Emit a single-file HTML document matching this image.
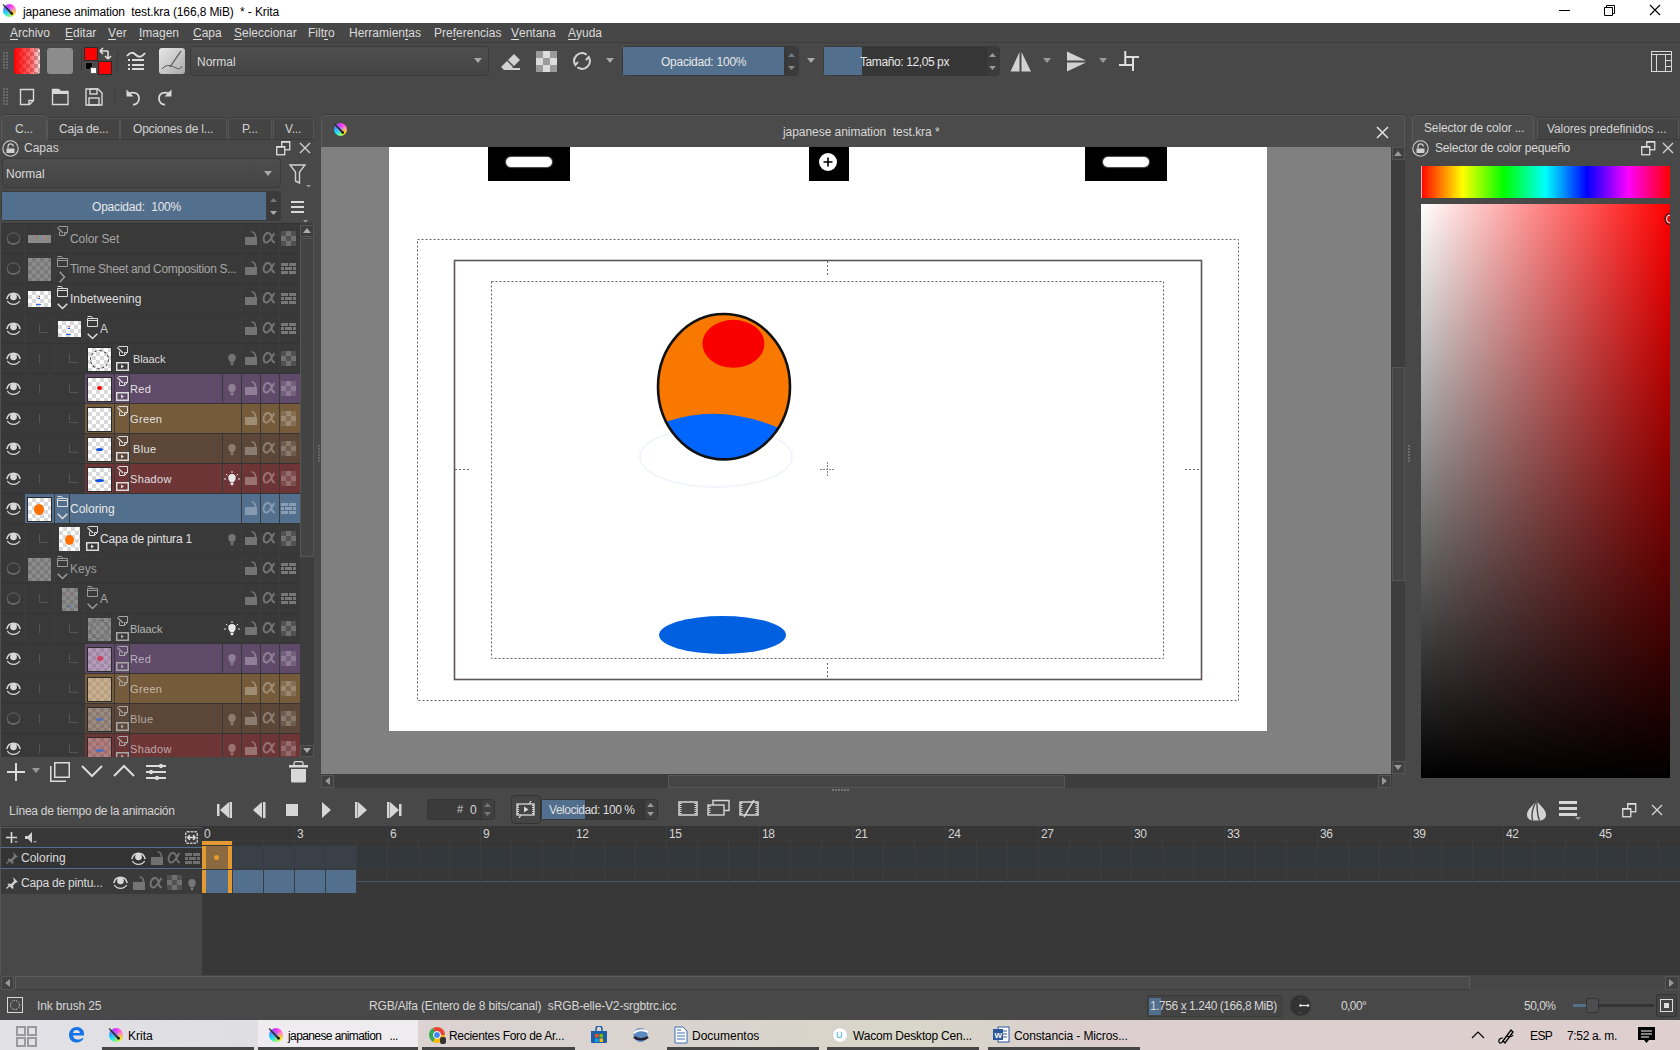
<!DOCTYPE html>
<html><head><meta charset="utf-8">
<style>
*{margin:0;padding:0;box-sizing:border-box}
html,body{width:1680px;height:1050px;overflow:hidden;background:#484848}
body{position:relative;font-family:"Liberation Sans",sans-serif;font-size:12px;color:#d8d8d8}
.a{position:absolute;display:block}
.t{position:absolute;white-space:nowrap}
u{text-decoration:none;border-bottom:1px solid currentColor;display:inline-block;line-height:12px;padding-bottom:0}
</style></head><body>
<div class="a" style="left:0px;top:0px;width:1680px;height:23px;background:#fff;"></div>
<div class="a" style="left:3px;top:4px;width:13px;height:13px;border-radius:50%;background:radial-gradient(circle at 45% 55%,rgba(120,160,255,.9) 0,rgba(120,160,255,0) 45%),conic-gradient(from 20deg,#ff3cf0,#ff8ac0 50deg,#ffe000 110deg,#9cff60 150deg,#00e8ff 220deg,#4a8cff 270deg,#c040ff 320deg,#ff3cf0)"></div>
<svg class="a" style="left:2px;top:4px;" width="14" height="14" viewBox="0 0 14 14"><path d="M0.50 0.80L1.60 0.20L10.50 8.80L9.20 10.50z" fill="#2a2a2a"/><circle cx="9.80" cy="9.60" r="1.30" fill="#1a1a1a"/></svg>
<div class="t" style="left:23px;top:6px;font-size:12px;line-height:12px;color:#000;letter-spacing:-0.12px">japanese animation&nbsp; test.kra (166,8 MiB)&nbsp; * - Krita</div>
<div class="a" style="left:1559px;top:10px;width:11px;height:1px;background:#000;"></div>
<svg class="a" style="left:1603px;top:4px;" width="13" height="13" viewBox="0 0 13 13"><path d="M1.5 3.5h8v8h-8z" fill="none" stroke="#000"/><path d="M3.5 3.5V1.5h8v8H9.5" fill="none" stroke="#000"/></svg>
<svg class="a" style="left:1649px;top:4px;" width="13" height="13" viewBox="0 0 13 13"><path d="M1 1L11 11M11 1L1 11" stroke="#000" stroke-width="1.1"/></svg>
<div class="a" style="left:0px;top:23px;width:1680px;height:19px;background:#474747;"></div>
<div class="a" style="left:0px;top:42px;width:1680px;height:1px;background:#3d3d3d;"></div>
<div class="t" style="left:10px;top:27px;font-size:12px;line-height:12px;color:#dadada;"><u>A</u>rchivo</div>
<div class="t" style="left:65px;top:27px;font-size:12px;line-height:12px;color:#dadada;"><u>E</u>ditar</div>
<div class="t" style="left:108px;top:27px;font-size:12px;line-height:12px;color:#dadada;"><u>V</u>er</div>
<div class="t" style="left:139px;top:27px;font-size:12px;line-height:12px;color:#dadada;"><u>I</u>magen</div>
<div class="t" style="left:193px;top:27px;font-size:12px;line-height:12px;color:#dadada;"><u>C</u>apa</div>
<div class="t" style="left:234px;top:27px;font-size:12px;line-height:12px;color:#dadada;"><u>S</u>eleccionar</div>
<div class="t" style="left:308px;top:27px;font-size:12px;line-height:12px;color:#dadada;">Filt<u>r</u>o</div>
<div class="t" style="left:349px;top:27px;font-size:12px;line-height:12px;color:#dadada;">Herramien<u>t</u>as</div>
<div class="t" style="left:434px;top:27px;font-size:12px;line-height:12px;color:#dadada;">Pre<u>f</u>erencias</div>
<div class="t" style="left:511px;top:27px;font-size:12px;line-height:12px;color:#dadada;"><u>V</u>entana</div>
<div class="t" style="left:568px;top:27px;font-size:12px;line-height:12px;color:#dadada;"><u>A</u>yuda</div>
<svg class="a" style="left:3px;top:52px;" width="6" height="18" viewBox="0 0 6 18"><rect x="0" y="0" width="2" height="2" fill="#6a6a6a"/><rect x="3" y="0" width="2" height="2" fill="#6a6a6a"/><rect x="0" y="3" width="2" height="2" fill="#6a6a6a"/><rect x="3" y="3" width="2" height="2" fill="#6a6a6a"/><rect x="0" y="6" width="2" height="2" fill="#6a6a6a"/><rect x="3" y="6" width="2" height="2" fill="#6a6a6a"/><rect x="0" y="9" width="2" height="2" fill="#6a6a6a"/><rect x="3" y="9" width="2" height="2" fill="#6a6a6a"/><rect x="0" y="12" width="2" height="2" fill="#6a6a6a"/><rect x="3" y="12" width="2" height="2" fill="#6a6a6a"/><rect x="0" y="15" width="2" height="2" fill="#6a6a6a"/><rect x="3" y="15" width="2" height="2" fill="#6a6a6a"/></svg>
<div class="a" style="left:14px;top:48px;width:26px;height:26px;border-radius:3px;background:linear-gradient(to right,rgba(255,0,0,1),rgba(255,0,0,.55) 70%,rgba(255,0,0,.1)),repeating-conic-gradient(#bbb 0 25%,#fff 0 50%) 0 0/8px 8px"></div>
<div class="a" style="left:47px;top:48px;width:26px;height:26px;border-radius:3px;background:#8c8c8c"></div>
<div class="a" style="left:81px;top:50px;width:1px;height:22px;background:#3e3e3e;"></div>
<div class="a" style="left:84px;top:47px;width:14px;height:14px;background:#2a2a2a;"></div>
<div class="a" style="left:85px;top:48px;width:12px;height:12px;background:#f00;"></div>
<svg class="a" style="left:98px;top:47px;" width="14" height="14" viewBox="0 0 14 14"><path d="M2 4h8M2 4l3-3M2 4l3 3M10 4v8M10 12l-3-3M10 12l3-3" stroke="#ddd" stroke-width="1.6" fill="none"/></svg>
<div class="a" style="left:85px;top:62px;width:8px;height:8px;background:#555;"></div>
<div class="a" style="left:86px;top:63px;width:6px;height:6px;background:#000;"></div>
<div class="a" style="left:90px;top:67px;width:7px;height:7px;background:#555;"></div>
<div class="a" style="left:91px;top:68px;width:5px;height:5px;background:#fff;"></div>
<div class="a" style="left:98px;top:61px;width:14px;height:14px;background:#2a2a2a;"></div>
<div class="a" style="left:99px;top:62px;width:12px;height:12px;background:#f00;"></div>
<div class="a" style="left:117px;top:50px;width:1px;height:22px;background:#3e3e3e;"></div>
<svg class="a" style="left:126px;top:50px;" width="22" height="22" viewBox="0 0 22 22"><path d="M1 6c3-4 6-4 9-1s6 2 9-2" stroke="#dcdcdc" stroke-width="2" fill="none"/><rect x="2" y="9" width="2" height="2" fill="#ddd"/><rect x="6" y="9" width="12" height="2" fill="#ddd"/><rect x="2" y="14" width="2" height="2" fill="#ddd"/><rect x="6" y="14" width="12" height="2" fill="#ddd"/><rect x="2" y="18" width="2" height="2" fill="#ddd"/><rect x="6" y="18" width="12" height="2" fill="#ddd"/></svg>
<div class="a" style="left:159px;top:48px;width:26px;height:26px;border-radius:3px;background:linear-gradient(135deg,#e8e8e8,#aaa)"></div>
<svg class="a" style="left:159px;top:48px;" width="26" height="26" viewBox="0 0 26 26"><path d="M3 21c5-6 10-3 14-1s5 0 6-2" stroke="#555" stroke-width="1" fill="none"/><path d="M11 19L22 3" stroke="#555" stroke-width="1.3"/></svg>
<div class="a" style="left:190px;top:46px;width:299px;height:30px;border-radius:4px;border:1px solid #3a3a3a;background:linear-gradient(#4f4f4f,#444)"></div>
<div class="t" style="left:197px;top:56px;font-size:12px;line-height:12px;color:#dadada;">Normal</div>
<svg class="a" style="left:474px;top:58px;" width="9" height="6" viewBox="0 0 9 6"><path d="M0 0h8L4 5z" fill="#a8a8a8"/></svg>
<svg class="a" style="left:500px;top:51px;" width="21" height="20" viewBox="0 0 21 20"><path d="M8 9L14 3l6 6-6 6z" fill="#d2d2d2"/><path d="M7 10l6 6-3 3H4L1 16z" fill="#d2d2d2"/><rect x="6" y="17" width="14" height="2" fill="#d2d2d2"/></svg>
<svg class="a" style="left:536px;top:51px;" width="21" height="21" viewBox="0 0 21 21"><rect x="0" y="0" width="7" height="7" fill="#9a9a9a"/><rect x="7" y="0" width="7" height="7" fill="#dcdcdc"/><rect x="14" y="0" width="7" height="7" fill="#9a9a9a"/><rect x="0" y="7" width="7" height="7" fill="#dcdcdc"/><rect x="7" y="7" width="7" height="7" fill="#9a9a9a"/><rect x="14" y="7" width="7" height="7" fill="#dcdcdc"/><rect x="0" y="14" width="7" height="7" fill="#9a9a9a"/><rect x="7" y="14" width="7" height="7" fill="#dcdcdc"/><rect x="14" y="14" width="7" height="7" fill="#9a9a9a"/></svg>
<svg class="a" style="left:572px;top:51px;" width="20" height="20" viewBox="0 0 20 20"><g stroke="#d2d2d2" stroke-width="2" fill="none" stroke-linecap="round"><path d="M14 3.3A7.8 7.8 0 0 0 3.3 14L5.4 11.6"/><path d="M6 16.7A7.8 7.8 0 0 0 16.7 6L14.4 8.6"/></g></svg>
<svg class="a" style="left:606px;top:58px;" width="9" height="6" viewBox="0 0 9 6"><path d="M0 0h8L4 5z" fill="#a8a8a8"/></svg>
<div class="a" style="left:622px;top:46px;width:177px;height:30px;border-radius:4px;border:1px solid #3a3a3a;background:#3a3a3a"></div>
<div class="a" style="left:623px;top:47px;width:161px;height:28px;background:#52708e;"></div>
<div class="a" style="left:785px;top:47px;width:13px;height:28px;background:#3b3b3b;border-left:1px solid #333"></div>
<svg class="a" style="left:786px;top:52px;" width="11" height="20" viewBox="0 0 11 20"><path d="M2 5h7L5.5 1z" fill="#6a7a8a"/><path d="M2 14h7L5.5 18z" fill="#888"/></svg>
<div class="t" style="left:661px;top:56px;font-size:12px;line-height:12px;color:#e6e6e6;letter-spacing:-0.25px">Opacidad: 100%</div>
<svg class="a" style="left:807px;top:58px;" width="9" height="6" viewBox="0 0 9 6"><path d="M0 0h8L4 5z" fill="#a8a8a8"/></svg>
<div class="a" style="left:823px;top:46px;width:177px;height:30px;border-radius:4px;border:1px solid #3a3a3a;background:#363636"></div>
<div class="a" style="left:824px;top:47px;width:38px;height:28px;background:#52708e;"></div>
<div class="a" style="left:986px;top:47px;width:13px;height:28px;background:#3b3b3b;border-left:1px solid #333"></div>
<svg class="a" style="left:987px;top:52px;" width="11" height="20" viewBox="0 0 11 20"><path d="M2 5h7L5.5 1z" fill="#999"/><path d="M2 14h7L5.5 18z" fill="#999"/></svg>
<div class="t" style="left:860px;top:56px;font-size:12px;line-height:12px;color:#e6e6e6;letter-spacing:-0.4px">Tamaño: 12,05 px</div>
<svg class="a" style="left:1010px;top:51px;" width="22" height="21" viewBox="0 0 22 21"><path d="M0.5 20.5L9.5 1v19.5z" fill="#d2d2d2"/><path d="M11.5 1l9.5 19.5h-9.5z" fill="#d2d2d2"/></svg>
<svg class="a" style="left:1043px;top:58px;" width="9" height="6" viewBox="0 0 9 6"><path d="M0 0h8L4 5z" fill="#999"/></svg>
<svg class="a" style="left:1066px;top:51px;" width="22" height="21" viewBox="0 0 22 21"><path d="M1 0.5L20 9.5H1z" fill="#d2d2d2"/><path d="M1 11.5h19L1 20.5z" fill="#d2d2d2"/></svg>
<svg class="a" style="left:1099px;top:58px;" width="9" height="6" viewBox="0 0 9 6"><path d="M0 0h8L4 5z" fill="#999"/></svg>
<svg class="a" style="left:1118px;top:50px;" width="22" height="22" viewBox="0 0 22 22"><path d="M7.25 1v15M1 15h15M15 7v14M7 7h14" stroke="#e0e0e0" stroke-width="2" fill="none"/></svg>
<svg class="a" style="left:1651px;top:51px;" width="22" height="22" viewBox="0 0 22 22"><rect x="0.5" y="0.5" width="20" height="20" fill="none" stroke="#d8d8d8"/><path d="M0.5 3.5h20M5.5 3.5v17M14.5 3.5v17M14.5 9.5h6M14.5 15.5h6" stroke="#d8d8d8" fill="none"/></svg>
<svg class="a" style="left:3px;top:88px;" width="6" height="18" viewBox="0 0 6 18"><rect x="0" y="0" width="2" height="2" fill="#6a6a6a"/><rect x="3" y="0" width="2" height="2" fill="#6a6a6a"/><rect x="0" y="3" width="2" height="2" fill="#6a6a6a"/><rect x="3" y="3" width="2" height="2" fill="#6a6a6a"/><rect x="0" y="6" width="2" height="2" fill="#6a6a6a"/><rect x="3" y="6" width="2" height="2" fill="#6a6a6a"/><rect x="0" y="9" width="2" height="2" fill="#6a6a6a"/><rect x="3" y="9" width="2" height="2" fill="#6a6a6a"/><rect x="0" y="12" width="2" height="2" fill="#6a6a6a"/><rect x="3" y="12" width="2" height="2" fill="#6a6a6a"/><rect x="0" y="15" width="2" height="2" fill="#6a6a6a"/><rect x="3" y="15" width="2" height="2" fill="#6a6a6a"/></svg>
<svg class="a" style="left:19px;top:88px;" width="16" height="18" viewBox="0 0 16 18"><path d="M1.5 1.5h13v11l-4 4h-9z" fill="none" stroke="#d8d8d8" stroke-width="1.4"/><path d="M10 16v-3.5h4" fill="none" stroke="#d8d8d8" stroke-width="1.4"/></svg>
<svg class="a" style="left:51px;top:88px;" width="18" height="18" viewBox="0 0 18 18"><path d="M1.5 16.5V1.5h6l2 2h7.5v13z" fill="none" stroke="#d8d8d8" stroke-width="1.4"/><path d="M1 1h6.5l2 2.5H17V6H1z" fill="#d8d8d8"/></svg>
<svg class="a" style="left:85px;top:88px;" width="18" height="18" viewBox="0 0 18 18"><path d="M1 1h12l4 4v12H1z" fill="none" stroke="#d8d8d8" stroke-width="1.4"/><rect x="5" y="1" width="7" height="5" fill="none" stroke="#d8d8d8" stroke-width="1.4"/><rect x="4" y="10" width="10" height="7" fill="none" stroke="#d8d8d8" stroke-width="1.4"/></svg>
<div class="a" style="left:114px;top:89px;width:1px;height:18px;background:#3e3e3e;"></div>
<svg class="a" style="left:125px;top:88px;" width="17" height="18" viewBox="0 0 17 18"><path d="M3 6.5C6 3.5 14 4 14 10.5 14 14.5 11 17 8 16.5" stroke="#d8d8d8" stroke-width="1.8" fill="none"/><path d="M1.5 1.5v7h7z" fill="#d8d8d8"/></svg>
<svg class="a" style="left:156px;top:88px;" width="17" height="18" viewBox="0 0 17 18"><path d="M14 6.5C11 3.5 3 4 3 10.5 3 14.5 6 17 9 16.5" stroke="#d8d8d8" stroke-width="1.8" fill="none"/><path d="M15.5 1.5v7h-7z" fill="#d8d8d8"/></svg>
<div class="a" style="left:46px;top:139px;width:268px;height:1px;background:#3a3a3a;"></div>
<div class="a" style="left:47px;top:118px;width:73px;height:21px;background:#444;border:1px solid #555;border-bottom:none;border-radius:4px 4px 0 0;box-shadow:0 -1px 0 #3a3a3a"></div>
<div class="t" style="left:59px;top:123px;font-size:12px;line-height:12px;color:#d2d2d2;letter-spacing:-0.2px">Caja de...</div>
<div class="a" style="left:120px;top:118px;width:107px;height:21px;background:#444;border:1px solid #555;border-bottom:none;border-radius:4px 4px 0 0;box-shadow:0 -1px 0 #3a3a3a"></div>
<div class="t" style="left:133px;top:123px;font-size:12px;line-height:12px;color:#d2d2d2;letter-spacing:-0.2px">Opciones de l...</div>
<div class="a" style="left:228px;top:118px;width:44px;height:21px;background:#444;border:1px solid #555;border-bottom:none;border-radius:4px 4px 0 0;box-shadow:0 -1px 0 #3a3a3a"></div>
<div class="t" style="left:242px;top:123px;font-size:12px;line-height:12px;color:#d2d2d2;letter-spacing:-0.2px">P...</div>
<div class="a" style="left:273px;top:118px;width:41px;height:21px;background:#444;border:1px solid #555;border-bottom:none;border-radius:4px 4px 0 0;box-shadow:0 -1px 0 #3a3a3a"></div>
<div class="t" style="left:285px;top:123px;font-size:12px;line-height:12px;color:#d2d2d2;letter-spacing:-0.2px">V...</div>
<div class="a" style="left:1px;top:115px;width:46px;height:26px;background:#4b4b4b;border:1px solid #5a5a5a;border-bottom:none;border-radius:4px 4px 0 0;box-shadow:0 -1px 0 #3a3a3a"></div>
<div class="t" style="left:15px;top:123px;font-size:12px;line-height:12px;color:#d2d2d2;letter-spacing:-0.2px">C...</div>
<svg class="a" style="left:2px;top:140px;" width="17" height="17" viewBox="0 0 17 17"><circle cx="8.5" cy="8.5" r="7.7" fill="none" stroke="#d0d0d0" stroke-width="1.1"/><rect x="4.5" y="8.5" width="8" height="4.5" fill="#d0d0d0"/><path d="M6 8.5V6.5a2.6 2.6 0 0 1 5.2 0" fill="none" stroke="#d0d0d0" stroke-width="1.2"/></svg>
<div class="t" style="left:24px;top:142px;font-size:12px;line-height:12px;color:#d2d2d2;">Capas</div>
<svg class="a" style="left:275px;top:140px;" width="16" height="16" viewBox="0 0 16 16"><rect x="6.75" y="1.75" width="8" height="8" fill="none" stroke="#dedede" stroke-width="1.3"/><rect x="6.5" y="1" width="8.5" height="1.6" fill="#dedede"/><rect x="1.75" y="6.75" width="8" height="8" fill="#484848" stroke="#dedede" stroke-width="1.3"/><rect x="1.5" y="6" width="8.5" height="1.6" fill="#dedede"/></svg>
<svg class="a" style="left:299px;top:142px;" width="12" height="12" viewBox="0 0 12 12"><path d="M1 1L11 11M11 1L1 11" stroke="#d0d0d0" stroke-width="1.4"/></svg>
<div class="a" style="left:2px;top:158px;width:279px;height:30px;border-radius:4px;border:1px solid #3a3a3a;background:linear-gradient(#4e4e4e,#444)"></div>
<div class="t" style="left:6px;top:168px;font-size:12px;line-height:12px;color:#dadada;">Normal</div>
<svg class="a" style="left:264px;top:171px;" width="9" height="6" viewBox="0 0 9 6"><path d="M0 0h8L4 5z" fill="#a8a8a8"/></svg>
<svg class="a" style="left:288px;top:163px;" width="24" height="26" viewBox="0 0 24 26"><path d="M2 2h15l-5.5 7v11l-4-2V9z" fill="none" stroke="#d0d0d0" stroke-width="1.4"/><path d="M18 22h5l-2.5 2.5z" fill="#999"/></svg>
<div class="a" style="left:1px;top:191px;width:280px;height:30px;border-radius:4px;border:1px solid #3a3a3a;background:#3b3b3b"></div>
<div class="a" style="left:2px;top:192px;width:264px;height:28px;background:#52708e;"></div>
<div class="a" style="left:267px;top:192px;width:13px;height:28px;background:#3b3b3b"></div>
<svg class="a" style="left:268px;top:197px;" width="11" height="20" viewBox="0 0 11 20"><path d="M2 5h7L5.5 1z" fill="#777"/><path d="M2 14h7L5.5 18z" fill="#aaa"/></svg>
<div class="t" style="left:92px;top:201px;font-size:12px;line-height:12px;color:#e6e6e6;letter-spacing:-0.2px">Opacidad:&nbsp; 100%</div>
<svg class="a" style="left:289px;top:198px;" width="20" height="26" viewBox="0 0 20 26"><rect x="2" y="3" width="13" height="2" fill="#d8d8d8"/><rect x="2" y="8" width="13" height="2" fill="#d8d8d8"/><rect x="2" y="13" width="13" height="2" fill="#d8d8d8"/><path d="M14 22h5l-2.5 2.5z" fill="#999"/></svg>
<div class="a" style="left:0px;top:223px;width:300px;height:534px;background:#393939;"></div>
<div class="a" style="left:0px;top:223px;width:1px;height:534px;background:#505050;"></div>
<div class="a" style="left:300px;top:223px;width:14px;height:534px;background:#3d3d3d;"></div>
<div class="a" style="left:300px;top:225px;width:14px;height:12px;border:1px solid #575757;background:#3d3d3d"></div>
<svg class="a" style="left:303px;top:228px;" width="9" height="6" viewBox="0 0 9 6"><path d="M0 5h8L4 0z" fill="#aaa"/></svg>
<div class="a" style="left:300px;top:238px;width:14px;height:319px;border:1px solid #575757;background:#434343"></div>
<div class="a" style="left:300px;top:745px;width:14px;height:12px;border:1px solid #575757;background:#3d3d3d"></div>
<svg class="a" style="left:303px;top:748px;" width="9" height="6" viewBox="0 0 9 6"><path d="M0 0h8L4 5z" fill="#aaa"/></svg>
<div class="a" style="left:1px;top:223px;width:299px;height:1px;background:#343434;"></div>
<svg class="a" style="left:6px;top:232px;" width="15" height="14" viewBox="0 0 15 14"><ellipse cx="7.5" cy="6.5" rx="6.3" ry="5.6" fill="none" stroke="#666" stroke-width="1"/><path d="M1.5 9C4 13 11 13 13.5 9" fill="none" stroke="#707070" stroke-width="1.3"/></svg>
<div class="a" style="left:24px;top:224px;width:1px;height:29px;background:#3d3d3d;"></div>
<div class="a" style="left:54px;top:224px;width:1px;height:29px;background:#3d3d3d;"></div>
<div class="a" style="left:69px;top:224px;width:1px;height:29px;background:#3d3d3d;"></div>
<div class="a" style="left:241px;top:224px;width:1px;height:29px;background:#3d3d3d;"></div>
<div class="a" style="left:260px;top:224px;width:1px;height:29px;background:#3d3d3d;"></div>
<div class="a" style="left:279px;top:224px;width:1px;height:29px;background:#3d3d3d;"></div>
<div class="a" style="left:28px;top:235px;width:23px;height:8px;background:#8a8a8a"></div>
<div class="a" style="left:37px;top:236px;width:1px;height:3px;background:#c06060;"></div>
<div class="a" style="left:39px;top:236px;width:1px;height:3px;background:#60b060;"></div>
<div class="a" style="left:41px;top:236px;width:1px;height:3px;background:#50a0d0;"></div>
<div class="a" style="left:43px;top:236px;width:1px;height:3px;background:#c070b0;"></div>
<div class="a" style="left:45px;top:236px;width:1px;height:3px;background:#d09030;"></div>
<svg class="a" style="left:57px;top:226px;" width="12" height="11" viewBox="0 0 12 11"><path d="M1.5 0.5H10.5V6.5L7.5 9.5H2.5V5.5" fill="none" stroke="#9a9a9a" stroke-width="1"/><path d="M7.5 9.5V6.5H10.5" fill="none" stroke="#9a9a9a"/><path d="M0.3 1.5L6 7" stroke="#9a9a9a" stroke-width="1.3"/></svg>
<div class="t" style="left:70px;top:233px;font-size:12px;line-height:12px;color:#a6a6a6;letter-spacing:-0.1px">Color Set</div>
<svg class="a" style="left:245px;top:231px;" width="13" height="15" viewBox="0 0 13 15"><rect x="0" y="6" width="12" height="8" fill="rgba(255,255,255,0.30)"/><path d="M6.5 0.8A4 5 0 0 1 10.5 6" fill="none" stroke="rgba(255,255,255,0.30)" stroke-width="1.6"/></svg>
<svg class="a" style="left:262px;top:232px" width="15" height="12" viewBox="0 0 15 13"><path d="M9.8 5.5C9 2.2 7.3 1 5.6 1 2.8 1 1.1 4.5 1.1 7.6 1.1 10.2 2.6 11.6 4.6 11.3 7.4 10.9 10 5.5 12.8 1.2M9.6 6.2C9.9 9 11 11.2 13.3 11.4" fill="none" stroke="rgba(255,255,255,0.30)" stroke-width="2.1"/></svg>
<svg class="a" style="left:281px;top:231px;" width="15" height="15" viewBox="0 0 15 15"><rect x="0" y="0" width="5" height="5" fill="rgba(255,255,255,0.12)"/><rect x="5" y="0" width="5" height="5" fill="rgba(255,255,255,0.28)"/><rect x="10" y="0" width="5" height="5" fill="rgba(255,255,255,0.12)"/><rect x="0" y="5" width="5" height="5" fill="rgba(255,255,255,0.28)"/><rect x="5" y="5" width="5" height="5" fill="rgba(255,255,255,0.12)"/><rect x="10" y="5" width="5" height="5" fill="rgba(255,255,255,0.28)"/><rect x="0" y="10" width="5" height="5" fill="rgba(255,255,255,0.12)"/><rect x="5" y="10" width="5" height="5" fill="rgba(255,255,255,0.28)"/><rect x="10" y="10" width="5" height="5" fill="rgba(255,255,255,0.12)"/></svg>
<div class="a" style="left:1px;top:253px;width:299px;height:1px;background:#343434;"></div>
<svg class="a" style="left:6px;top:262px;" width="15" height="14" viewBox="0 0 15 14"><ellipse cx="7.5" cy="6.5" rx="6.3" ry="5.6" fill="none" stroke="#666" stroke-width="1"/><path d="M1.5 9C4 13 11 13 13.5 9" fill="none" stroke="#707070" stroke-width="1.3"/></svg>
<div class="a" style="left:24px;top:254px;width:1px;height:29px;background:#3d3d3d;"></div>
<div class="a" style="left:54px;top:254px;width:1px;height:29px;background:#3d3d3d;"></div>
<div class="a" style="left:69px;top:254px;width:1px;height:29px;background:#3d3d3d;"></div>
<div class="a" style="left:241px;top:254px;width:1px;height:29px;background:#3d3d3d;"></div>
<div class="a" style="left:260px;top:254px;width:1px;height:29px;background:#3d3d3d;"></div>
<div class="a" style="left:279px;top:254px;width:1px;height:29px;background:#3d3d3d;"></div>
<div class="a" style="left:28px;top:258px;width:23px;height:23px;background:repeating-conic-gradient(#7a7a7a 0 25%,#8c8c8c 0 50%) 0 0/8px 8px"></div>
<svg class="a" style="left:57px;top:256px;" width="11" height="11" viewBox="0 0 11 11"><path d="M0.5 2.5h10v8h-10z" fill="none" stroke="#9a9a9a"/><path d="M0.5 0.5h4l1.5 2" fill="none" stroke="#9a9a9a"/><path d="M0.5 4.5h10" stroke="#9a9a9a"/></svg>
<svg class="a" style="left:59px;top:271px;" width="7" height="12" viewBox="0 0 7 12"><path d="M0.7 0.7L5.5 6 0.7 11.3" fill="none" stroke="#9a9a9a" stroke-width="1.5"/></svg>
<div class="t" style="left:70px;top:263px;font-size:12px;line-height:12px;color:#a6a6a6;letter-spacing:-0.3px">Time Sheet and Composition S...</div>
<svg class="a" style="left:245px;top:261px;" width="13" height="15" viewBox="0 0 13 15"><rect x="0" y="6" width="12" height="8" fill="rgba(255,255,255,0.30)"/><path d="M6.5 0.8A4 5 0 0 1 10.5 6" fill="none" stroke="rgba(255,255,255,0.30)" stroke-width="1.6"/></svg>
<svg class="a" style="left:262px;top:262px" width="15" height="12" viewBox="0 0 15 13"><path d="M9.8 5.5C9 2.2 7.3 1 5.6 1 2.8 1 1.1 4.5 1.1 7.6 1.1 10.2 2.6 11.6 4.6 11.3 7.4 10.9 10 5.5 12.8 1.2M9.6 6.2C9.9 9 11 11.2 13.3 11.4" fill="none" stroke="rgba(255,255,255,0.30)" stroke-width="2.1"/></svg>
<svg class="a" style="left:281px;top:263px;" width="15" height="12" viewBox="0 0 15 12"><g fill="rgba(255,255,255,0.32)"><rect x="0" y="0" width="7" height="3"/><rect x="8" y="0" width="7" height="3"/><rect x="0" y="4" width="3" height="3"/><rect x="4" y="4" width="7" height="3"/><rect x="12" y="4" width="3" height="3"/><rect x="0" y="8" width="7" height="3"/><rect x="8" y="8" width="7" height="3"/></g></svg>
<div class="a" style="left:1px;top:283px;width:299px;height:1px;background:#343434;"></div>
<svg class="a" style="left:6px;top:292px;" width="15" height="14" viewBox="0 0 15 14"><path d="M0.8 7.2C2.5 -0.6 12.5 -0.6 14.2 7.2" fill="none" stroke="#d8d8d8" stroke-width="1.5"/><circle cx="7.5" cy="4.8" r="3.4" fill="#d8d8d8"/><path d="M1.3 9C4 13.5 11 13.5 13.7 9" fill="none" stroke="#d8d8d8" stroke-width="1.3"/></svg>
<div class="a" style="left:24px;top:284px;width:1px;height:29px;background:#3d3d3d;"></div>
<div class="a" style="left:54px;top:284px;width:1px;height:29px;background:#3d3d3d;"></div>
<div class="a" style="left:69px;top:284px;width:1px;height:29px;background:#3d3d3d;"></div>
<div class="a" style="left:241px;top:284px;width:1px;height:29px;background:#3d3d3d;"></div>
<div class="a" style="left:260px;top:284px;width:1px;height:29px;background:#3d3d3d;"></div>
<div class="a" style="left:279px;top:284px;width:1px;height:29px;background:#3d3d3d;"></div>
<div class="a" style="left:28px;top:291px;width:23px;height:16px;background:repeating-conic-gradient(#d9d9d9 0 25%,#fff 0 50%) 0 0/8px 8px"></div>
<div class="a" style="left:39px;top:296px;width:1px;height:1px;background:#f00;"></div>
<div class="a" style="left:38px;top:298px;width:2px;height:1px;background:#2060ff;"></div>
<div class="a" style="left:36px;top:304px;width:5px;height:1px;background:#2060ff;"></div>
<svg class="a" style="left:57px;top:286px;" width="11" height="11" viewBox="0 0 11 11"><path d="M0.5 2.5h10v8h-10z" fill="none" stroke="#dcdcdc"/><path d="M0.5 0.5h4l1.5 2" fill="none" stroke="#dcdcdc"/><path d="M0.5 4.5h10" stroke="#dcdcdc"/></svg>
<svg class="a" style="left:57px;top:303px;" width="11" height="7" viewBox="0 0 11 7"><path d="M0.7 0.7L5.5 5.5 10.3 0.7" fill="none" stroke="#dcdcdc" stroke-width="1.5"/></svg>
<div class="t" style="left:70px;top:293px;font-size:12px;line-height:12px;color:#dedede;letter-spacing:0px">Inbetweening</div>
<svg class="a" style="left:245px;top:291px;" width="13" height="15" viewBox="0 0 13 15"><rect x="0" y="6" width="12" height="8" fill="rgba(255,255,255,0.30)"/><path d="M6.5 0.8A4 5 0 0 1 10.5 6" fill="none" stroke="rgba(255,255,255,0.30)" stroke-width="1.6"/></svg>
<svg class="a" style="left:262px;top:292px" width="15" height="12" viewBox="0 0 15 13"><path d="M9.8 5.5C9 2.2 7.3 1 5.6 1 2.8 1 1.1 4.5 1.1 7.6 1.1 10.2 2.6 11.6 4.6 11.3 7.4 10.9 10 5.5 12.8 1.2M9.6 6.2C9.9 9 11 11.2 13.3 11.4" fill="none" stroke="rgba(255,255,255,0.30)" stroke-width="2.1"/></svg>
<svg class="a" style="left:281px;top:293px;" width="15" height="12" viewBox="0 0 15 12"><g fill="rgba(255,255,255,0.32)"><rect x="0" y="0" width="7" height="3"/><rect x="8" y="0" width="7" height="3"/><rect x="0" y="4" width="3" height="3"/><rect x="4" y="4" width="7" height="3"/><rect x="12" y="4" width="3" height="3"/><rect x="0" y="8" width="7" height="3"/><rect x="8" y="8" width="7" height="3"/></g></svg>
<div class="a" style="left:1px;top:313px;width:299px;height:1px;background:#343434;"></div>
<svg class="a" style="left:6px;top:322px;" width="15" height="14" viewBox="0 0 15 14"><path d="M0.8 7.2C2.5 -0.6 12.5 -0.6 14.2 7.2" fill="none" stroke="#d8d8d8" stroke-width="1.5"/><circle cx="7.5" cy="4.8" r="3.4" fill="#d8d8d8"/><path d="M1.3 9C4 13.5 11 13.5 13.7 9" fill="none" stroke="#d8d8d8" stroke-width="1.3"/></svg>
<div class="a" style="left:24px;top:314px;width:1px;height:29px;background:#3d3d3d;"></div>
<div class="a" style="left:54px;top:314px;width:1px;height:29px;background:#3d3d3d;"></div>
<div class="a" style="left:84px;top:314px;width:1px;height:29px;background:#3d3d3d;"></div>
<div class="a" style="left:99px;top:314px;width:1px;height:29px;background:#3d3d3d;"></div>
<div class="a" style="left:241px;top:314px;width:1px;height:29px;background:#3d3d3d;"></div>
<div class="a" style="left:260px;top:314px;width:1px;height:29px;background:#3d3d3d;"></div>
<div class="a" style="left:279px;top:314px;width:1px;height:29px;background:#3d3d3d;"></div>
<svg class="a" style="left:39px;top:324px;" width="9" height="9" viewBox="0 0 9 9"><path d="M0.5 0v8.5H9" fill="none" stroke="#555"/></svg>
<div class="a" style="left:58px;top:321px;width:23px;height:16px;background:repeating-conic-gradient(#d9d9d9 0 25%,#fff 0 50%) 0 0/8px 8px"></div>
<div class="a" style="left:69px;top:326px;width:1px;height:1px;background:#f00;"></div>
<div class="a" style="left:68px;top:328px;width:2px;height:1px;background:#2060ff;"></div>
<div class="a" style="left:66px;top:334px;width:5px;height:1px;background:#2060ff;"></div>
<svg class="a" style="left:87px;top:316px;" width="11" height="11" viewBox="0 0 11 11"><path d="M0.5 2.5h10v8h-10z" fill="none" stroke="#dcdcdc"/><path d="M0.5 0.5h4l1.5 2" fill="none" stroke="#dcdcdc"/><path d="M0.5 4.5h10" stroke="#dcdcdc"/></svg>
<svg class="a" style="left:87px;top:333px;" width="11" height="7" viewBox="0 0 11 7"><path d="M0.7 0.7L5.5 5.5 10.3 0.7" fill="none" stroke="#dcdcdc" stroke-width="1.5"/></svg>
<div class="t" style="left:100px;top:323px;font-size:12px;line-height:12px;color:#d0d0d0;letter-spacing:0px">A</div>
<svg class="a" style="left:245px;top:321px;" width="13" height="15" viewBox="0 0 13 15"><rect x="0" y="6" width="12" height="8" fill="rgba(255,255,255,0.30)"/><path d="M6.5 0.8A4 5 0 0 1 10.5 6" fill="none" stroke="rgba(255,255,255,0.30)" stroke-width="1.6"/></svg>
<svg class="a" style="left:262px;top:322px" width="15" height="12" viewBox="0 0 15 13"><path d="M9.8 5.5C9 2.2 7.3 1 5.6 1 2.8 1 1.1 4.5 1.1 7.6 1.1 10.2 2.6 11.6 4.6 11.3 7.4 10.9 10 5.5 12.8 1.2M9.6 6.2C9.9 9 11 11.2 13.3 11.4" fill="none" stroke="rgba(255,255,255,0.30)" stroke-width="2.1"/></svg>
<svg class="a" style="left:281px;top:323px;" width="15" height="12" viewBox="0 0 15 12"><g fill="rgba(255,255,255,0.32)"><rect x="0" y="0" width="7" height="3"/><rect x="8" y="0" width="7" height="3"/><rect x="0" y="4" width="3" height="3"/><rect x="4" y="4" width="7" height="3"/><rect x="12" y="4" width="3" height="3"/><rect x="0" y="8" width="7" height="3"/><rect x="8" y="8" width="7" height="3"/></g></svg>
<div class="a" style="left:1px;top:343px;width:299px;height:1px;background:#343434;"></div>
<svg class="a" style="left:6px;top:352px;" width="15" height="14" viewBox="0 0 15 14"><path d="M0.8 7.2C2.5 -0.6 12.5 -0.6 14.2 7.2" fill="none" stroke="#d8d8d8" stroke-width="1.5"/><circle cx="7.5" cy="4.8" r="3.4" fill="#d8d8d8"/><path d="M1.3 9C4 13.5 11 13.5 13.7 9" fill="none" stroke="#d8d8d8" stroke-width="1.3"/></svg>
<div class="a" style="left:24px;top:344px;width:1px;height:29px;background:#3d3d3d;"></div>
<div class="a" style="left:54px;top:344px;width:1px;height:29px;background:#3d3d3d;"></div>
<div class="a" style="left:84px;top:344px;width:1px;height:29px;background:#3d3d3d;"></div>
<div class="a" style="left:114px;top:344px;width:1px;height:29px;background:#3d3d3d;"></div>
<div class="a" style="left:129px;top:344px;width:1px;height:29px;background:#3d3d3d;"></div>
<div class="a" style="left:241px;top:344px;width:1px;height:29px;background:#3d3d3d;"></div>
<div class="a" style="left:260px;top:344px;width:1px;height:29px;background:#3d3d3d;"></div>
<div class="a" style="left:279px;top:344px;width:1px;height:29px;background:#3d3d3d;"></div>
<div class="a" style="left:39px;top:354px;width:1px;height:9px;background:#555;"></div>
<svg class="a" style="left:69px;top:354px;" width="9" height="9" viewBox="0 0 9 9"><path d="M0.5 0v8.5H9" fill="none" stroke="#555"/></svg>
<div class="a" style="left:87px;top:347px;width:25px;height:25px;border:1px solid #2a2a2a;background:repeating-conic-gradient(#d9d9d9 0 25%,#fff 0 50%) 0 0/8px 8px"></div>
<div class="a" style="left:90px;top:350px;width:19px;height:19px;border-radius:50%;border:1px dashed #333"></div>
<svg class="a" style="left:117px;top:346px;" width="12" height="11" viewBox="0 0 12 11"><path d="M1.5 0.5H10.5V6.5L7.5 9.5H2.5V5.5" fill="none" stroke="#dcdcdc" stroke-width="1"/><path d="M7.5 9.5V6.5H10.5" fill="none" stroke="#dcdcdc"/><path d="M0.3 1.5L6 7" stroke="#dcdcdc" stroke-width="1.3"/></svg>
<svg class="a" style="left:116px;top:362px;" width="13" height="9" viewBox="0 0 13 9"><rect x="0.75" y="0.75" width="11.5" height="7.5" fill="none" stroke="#dcdcdc" stroke-width="1.5"/><path d="M5 2.5v4l3-2z" fill="#dcdcdc"/></svg>
<div class="t" style="left:133px;top:354px;font-size:11px;line-height:11px;color:#dadada;letter-spacing:-0.1px">Blaack</div>
<svg class="a" style="left:245px;top:351px;" width="13" height="15" viewBox="0 0 13 15"><rect x="0" y="6" width="12" height="8" fill="rgba(255,255,255,0.30)"/><path d="M6.5 0.8A4 5 0 0 1 10.5 6" fill="none" stroke="rgba(255,255,255,0.30)" stroke-width="1.6"/></svg>
<svg class="a" style="left:262px;top:352px" width="15" height="12" viewBox="0 0 15 13"><path d="M9.8 5.5C9 2.2 7.3 1 5.6 1 2.8 1 1.1 4.5 1.1 7.6 1.1 10.2 2.6 11.6 4.6 11.3 7.4 10.9 10 5.5 12.8 1.2M9.6 6.2C9.9 9 11 11.2 13.3 11.4" fill="none" stroke="rgba(255,255,255,0.30)" stroke-width="2.1"/></svg>
<svg class="a" style="left:281px;top:351px;" width="15" height="15" viewBox="0 0 15 15"><rect x="0" y="0" width="5" height="5" fill="rgba(255,255,255,0.12)"/><rect x="5" y="0" width="5" height="5" fill="rgba(255,255,255,0.28)"/><rect x="10" y="0" width="5" height="5" fill="rgba(255,255,255,0.12)"/><rect x="0" y="5" width="5" height="5" fill="rgba(255,255,255,0.28)"/><rect x="5" y="5" width="5" height="5" fill="rgba(255,255,255,0.12)"/><rect x="10" y="5" width="5" height="5" fill="rgba(255,255,255,0.28)"/><rect x="0" y="10" width="5" height="5" fill="rgba(255,255,255,0.12)"/><rect x="5" y="10" width="5" height="5" fill="rgba(255,255,255,0.28)"/><rect x="10" y="10" width="5" height="5" fill="rgba(255,255,255,0.12)"/></svg>
<svg class="a" style="left:224px;top:351px;" width="16" height="16" viewBox="0 0 16 16"><path d="M6.3 11C4.6 9.3 4.3 8.2 4.3 6.8A3.7 3.7 0 0 1 11.7 6.8C11.7 8.2 11.4 9.3 9.7 11z" fill="rgba(255,255,255,0.30)"/><path d="M6.3 11.6h3.4l-.6 2.6h-2.2z" fill="rgba(255,255,255,0.30)"/></svg>
<div class="a" style="left:1px;top:373px;width:299px;height:1px;background:#343434;"></div>
<svg class="a" style="left:6px;top:382px;" width="15" height="14" viewBox="0 0 15 14"><path d="M0.8 7.2C2.5 -0.6 12.5 -0.6 14.2 7.2" fill="none" stroke="#d8d8d8" stroke-width="1.5"/><circle cx="7.5" cy="4.8" r="3.4" fill="#d8d8d8"/><path d="M1.3 9C4 13.5 11 13.5 13.7 9" fill="none" stroke="#d8d8d8" stroke-width="1.3"/></svg>
<div class="a" style="left:85px;top:374px;width:29px;height:29px;background:#604a6a;"></div>
<div class="a" style="left:115px;top:374px;width:14px;height:29px;background:#604a6a;"></div>
<div class="a" style="left:130px;top:374px;width:92px;height:29px;background:#604a6a;"></div>
<div class="a" style="left:223px;top:374px;width:18px;height:29px;background:#604a6a;"></div>
<div class="a" style="left:242px;top:374px;width:18px;height:29px;background:#604a6a;"></div>
<div class="a" style="left:261px;top:374px;width:18px;height:29px;background:#604a6a;"></div>
<div class="a" style="left:280px;top:374px;width:20px;height:29px;background:#604a6a;"></div>
<div class="a" style="left:39px;top:384px;width:1px;height:9px;background:#555;"></div>
<svg class="a" style="left:69px;top:384px;" width="9" height="9" viewBox="0 0 9 9"><path d="M0.5 0v8.5H9" fill="none" stroke="#555"/></svg>
<div class="a" style="left:87px;top:377px;width:25px;height:25px;border:1px solid #2a2a2a;background:repeating-conic-gradient(#d9d9d9 0 25%,#fff 0 50%) 0 0/8px 8px"></div>
<div class="a" style="left:97px;top:386px;width:5px;height:4px;border-radius:50%;background:#f00"></div>
<svg class="a" style="left:117px;top:376px;" width="12" height="11" viewBox="0 0 12 11"><path d="M1.5 0.5H10.5V6.5L7.5 9.5H2.5V5.5" fill="none" stroke="#dcdcdc" stroke-width="1"/><path d="M7.5 9.5V6.5H10.5" fill="none" stroke="#dcdcdc"/><path d="M0.3 1.5L6 7" stroke="#dcdcdc" stroke-width="1.3"/></svg>
<svg class="a" style="left:116px;top:392px;" width="13" height="9" viewBox="0 0 13 9"><rect x="0.75" y="0.75" width="11.5" height="7.5" fill="none" stroke="#dcdcdc" stroke-width="1.5"/><path d="M5 2.5v4l3-2z" fill="#dcdcdc"/></svg>
<div class="t" style="left:130px;top:384px;font-size:11px;line-height:11px;color:#e0e0e0;letter-spacing:0.35px">Red</div>
<svg class="a" style="left:245px;top:381px;" width="13" height="15" viewBox="0 0 13 15"><rect x="0" y="6" width="12" height="8" fill="rgba(255,255,255,0.30)"/><path d="M6.5 0.8A4 5 0 0 1 10.5 6" fill="none" stroke="rgba(255,255,255,0.30)" stroke-width="1.6"/></svg>
<svg class="a" style="left:262px;top:382px" width="15" height="12" viewBox="0 0 15 13"><path d="M9.8 5.5C9 2.2 7.3 1 5.6 1 2.8 1 1.1 4.5 1.1 7.6 1.1 10.2 2.6 11.6 4.6 11.3 7.4 10.9 10 5.5 12.8 1.2M9.6 6.2C9.9 9 11 11.2 13.3 11.4" fill="none" stroke="rgba(255,255,255,0.30)" stroke-width="2.1"/></svg>
<svg class="a" style="left:281px;top:381px;" width="15" height="15" viewBox="0 0 15 15"><rect x="0" y="0" width="5" height="5" fill="rgba(255,255,255,0.12)"/><rect x="5" y="0" width="5" height="5" fill="rgba(255,255,255,0.28)"/><rect x="10" y="0" width="5" height="5" fill="rgba(255,255,255,0.12)"/><rect x="0" y="5" width="5" height="5" fill="rgba(255,255,255,0.28)"/><rect x="5" y="5" width="5" height="5" fill="rgba(255,255,255,0.12)"/><rect x="10" y="5" width="5" height="5" fill="rgba(255,255,255,0.28)"/><rect x="0" y="10" width="5" height="5" fill="rgba(255,255,255,0.12)"/><rect x="5" y="10" width="5" height="5" fill="rgba(255,255,255,0.28)"/><rect x="10" y="10" width="5" height="5" fill="rgba(255,255,255,0.12)"/></svg>
<svg class="a" style="left:224px;top:381px;" width="16" height="16" viewBox="0 0 16 16"><path d="M6.3 11C4.6 9.3 4.3 8.2 4.3 6.8A3.7 3.7 0 0 1 11.7 6.8C11.7 8.2 11.4 9.3 9.7 11z" fill="rgba(255,255,255,0.30)"/><path d="M6.3 11.6h3.4l-.6 2.6h-2.2z" fill="rgba(255,255,255,0.30)"/></svg>
<div class="a" style="left:1px;top:403px;width:299px;height:1px;background:#343434;"></div>
<svg class="a" style="left:6px;top:412px;" width="15" height="14" viewBox="0 0 15 14"><path d="M0.8 7.2C2.5 -0.6 12.5 -0.6 14.2 7.2" fill="none" stroke="#d8d8d8" stroke-width="1.5"/><circle cx="7.5" cy="4.8" r="3.4" fill="#d8d8d8"/><path d="M1.3 9C4 13.5 11 13.5 13.7 9" fill="none" stroke="#d8d8d8" stroke-width="1.3"/></svg>
<div class="a" style="left:85px;top:404px;width:29px;height:29px;background:#755b3a;"></div>
<div class="a" style="left:115px;top:404px;width:14px;height:29px;background:#755b3a;"></div>
<div class="a" style="left:130px;top:404px;width:111px;height:29px;background:#755b3a;"></div>
<div class="a" style="left:242px;top:404px;width:18px;height:29px;background:#755b3a;"></div>
<div class="a" style="left:261px;top:404px;width:18px;height:29px;background:#755b3a;"></div>
<div class="a" style="left:280px;top:404px;width:20px;height:29px;background:#755b3a;"></div>
<div class="a" style="left:39px;top:414px;width:1px;height:9px;background:#555;"></div>
<svg class="a" style="left:69px;top:414px;" width="9" height="9" viewBox="0 0 9 9"><path d="M0.5 0v8.5H9" fill="none" stroke="#555"/></svg>
<div class="a" style="left:87px;top:407px;width:25px;height:25px;border:1px solid #2a2a2a;background:repeating-conic-gradient(#d9d9d9 0 25%,#fff 0 50%) 0 0/8px 8px"></div>
<svg class="a" style="left:117px;top:406px;" width="12" height="11" viewBox="0 0 12 11"><path d="M1.5 0.5H10.5V6.5L7.5 9.5H2.5V5.5" fill="none" stroke="#dcdcdc" stroke-width="1"/><path d="M7.5 9.5V6.5H10.5" fill="none" stroke="#dcdcdc"/><path d="M0.3 1.5L6 7" stroke="#dcdcdc" stroke-width="1.3"/></svg>
<div class="t" style="left:130px;top:414px;font-size:11px;line-height:11px;color:#e0e0e0;letter-spacing:0.35px">Green</div>
<svg class="a" style="left:245px;top:411px;" width="13" height="15" viewBox="0 0 13 15"><rect x="0" y="6" width="12" height="8" fill="rgba(255,255,255,0.30)"/><path d="M6.5 0.8A4 5 0 0 1 10.5 6" fill="none" stroke="rgba(255,255,255,0.30)" stroke-width="1.6"/></svg>
<svg class="a" style="left:262px;top:412px" width="15" height="12" viewBox="0 0 15 13"><path d="M9.8 5.5C9 2.2 7.3 1 5.6 1 2.8 1 1.1 4.5 1.1 7.6 1.1 10.2 2.6 11.6 4.6 11.3 7.4 10.9 10 5.5 12.8 1.2M9.6 6.2C9.9 9 11 11.2 13.3 11.4" fill="none" stroke="rgba(255,255,255,0.30)" stroke-width="2.1"/></svg>
<svg class="a" style="left:281px;top:411px;" width="15" height="15" viewBox="0 0 15 15"><rect x="0" y="0" width="5" height="5" fill="rgba(255,255,255,0.12)"/><rect x="5" y="0" width="5" height="5" fill="rgba(255,255,255,0.28)"/><rect x="10" y="0" width="5" height="5" fill="rgba(255,255,255,0.12)"/><rect x="0" y="5" width="5" height="5" fill="rgba(255,255,255,0.28)"/><rect x="5" y="5" width="5" height="5" fill="rgba(255,255,255,0.12)"/><rect x="10" y="5" width="5" height="5" fill="rgba(255,255,255,0.28)"/><rect x="0" y="10" width="5" height="5" fill="rgba(255,255,255,0.12)"/><rect x="5" y="10" width="5" height="5" fill="rgba(255,255,255,0.28)"/><rect x="10" y="10" width="5" height="5" fill="rgba(255,255,255,0.12)"/></svg>
<div class="a" style="left:1px;top:433px;width:299px;height:1px;background:#343434;"></div>
<svg class="a" style="left:6px;top:442px;" width="15" height="14" viewBox="0 0 15 14"><path d="M0.8 7.2C2.5 -0.6 12.5 -0.6 14.2 7.2" fill="none" stroke="#d8d8d8" stroke-width="1.5"/><circle cx="7.5" cy="4.8" r="3.4" fill="#d8d8d8"/><path d="M1.3 9C4 13.5 11 13.5 13.7 9" fill="none" stroke="#d8d8d8" stroke-width="1.3"/></svg>
<div class="a" style="left:85px;top:434px;width:29px;height:29px;background:#5b4637;"></div>
<div class="a" style="left:115px;top:434px;width:14px;height:29px;background:#5b4637;"></div>
<div class="a" style="left:130px;top:434px;width:92px;height:29px;background:#5b4637;"></div>
<div class="a" style="left:223px;top:434px;width:18px;height:29px;background:#5b4637;"></div>
<div class="a" style="left:242px;top:434px;width:18px;height:29px;background:#5b4637;"></div>
<div class="a" style="left:261px;top:434px;width:18px;height:29px;background:#5b4637;"></div>
<div class="a" style="left:280px;top:434px;width:20px;height:29px;background:#5b4637;"></div>
<div class="a" style="left:39px;top:444px;width:1px;height:9px;background:#555;"></div>
<svg class="a" style="left:69px;top:444px;" width="9" height="9" viewBox="0 0 9 9"><path d="M0.5 0v8.5H9" fill="none" stroke="#555"/></svg>
<div class="a" style="left:87px;top:437px;width:25px;height:25px;border:1px solid #2a2a2a;background:repeating-conic-gradient(#d9d9d9 0 25%,#fff 0 50%) 0 0/8px 8px"></div>
<div class="a" style="left:96px;top:448px;width:7px;height:3px;border-radius:50%;background:#1050e0"></div>
<svg class="a" style="left:117px;top:436px;" width="12" height="11" viewBox="0 0 12 11"><path d="M1.5 0.5H10.5V6.5L7.5 9.5H2.5V5.5" fill="none" stroke="#dcdcdc" stroke-width="1"/><path d="M7.5 9.5V6.5H10.5" fill="none" stroke="#dcdcdc"/><path d="M0.3 1.5L6 7" stroke="#dcdcdc" stroke-width="1.3"/></svg>
<svg class="a" style="left:116px;top:452px;" width="13" height="9" viewBox="0 0 13 9"><rect x="0.75" y="0.75" width="11.5" height="7.5" fill="none" stroke="#dcdcdc" stroke-width="1.5"/><path d="M5 2.5v4l3-2z" fill="#dcdcdc"/></svg>
<div class="t" style="left:133px;top:444px;font-size:11px;line-height:11px;color:#e0e0e0;letter-spacing:0.35px">Blue</div>
<svg class="a" style="left:245px;top:441px;" width="13" height="15" viewBox="0 0 13 15"><rect x="0" y="6" width="12" height="8" fill="rgba(255,255,255,0.30)"/><path d="M6.5 0.8A4 5 0 0 1 10.5 6" fill="none" stroke="rgba(255,255,255,0.30)" stroke-width="1.6"/></svg>
<svg class="a" style="left:262px;top:442px" width="15" height="12" viewBox="0 0 15 13"><path d="M9.8 5.5C9 2.2 7.3 1 5.6 1 2.8 1 1.1 4.5 1.1 7.6 1.1 10.2 2.6 11.6 4.6 11.3 7.4 10.9 10 5.5 12.8 1.2M9.6 6.2C9.9 9 11 11.2 13.3 11.4" fill="none" stroke="rgba(255,255,255,0.30)" stroke-width="2.1"/></svg>
<svg class="a" style="left:281px;top:441px;" width="15" height="15" viewBox="0 0 15 15"><rect x="0" y="0" width="5" height="5" fill="rgba(255,255,255,0.12)"/><rect x="5" y="0" width="5" height="5" fill="rgba(255,255,255,0.28)"/><rect x="10" y="0" width="5" height="5" fill="rgba(255,255,255,0.12)"/><rect x="0" y="5" width="5" height="5" fill="rgba(255,255,255,0.28)"/><rect x="5" y="5" width="5" height="5" fill="rgba(255,255,255,0.12)"/><rect x="10" y="5" width="5" height="5" fill="rgba(255,255,255,0.28)"/><rect x="0" y="10" width="5" height="5" fill="rgba(255,255,255,0.12)"/><rect x="5" y="10" width="5" height="5" fill="rgba(255,255,255,0.28)"/><rect x="10" y="10" width="5" height="5" fill="rgba(255,255,255,0.12)"/></svg>
<svg class="a" style="left:224px;top:441px;" width="16" height="16" viewBox="0 0 16 16"><path d="M6.3 11C4.6 9.3 4.3 8.2 4.3 6.8A3.7 3.7 0 0 1 11.7 6.8C11.7 8.2 11.4 9.3 9.7 11z" fill="rgba(255,255,255,0.30)"/><path d="M6.3 11.6h3.4l-.6 2.6h-2.2z" fill="rgba(255,255,255,0.30)"/></svg>
<div class="a" style="left:1px;top:463px;width:299px;height:1px;background:#343434;"></div>
<svg class="a" style="left:6px;top:472px;" width="15" height="14" viewBox="0 0 15 14"><path d="M0.8 7.2C2.5 -0.6 12.5 -0.6 14.2 7.2" fill="none" stroke="#d8d8d8" stroke-width="1.5"/><circle cx="7.5" cy="4.8" r="3.4" fill="#d8d8d8"/><path d="M1.3 9C4 13.5 11 13.5 13.7 9" fill="none" stroke="#d8d8d8" stroke-width="1.3"/></svg>
<div class="a" style="left:85px;top:464px;width:29px;height:29px;background:#6d3536;"></div>
<div class="a" style="left:115px;top:464px;width:14px;height:29px;background:#6d3536;"></div>
<div class="a" style="left:130px;top:464px;width:92px;height:29px;background:#6d3536;"></div>
<div class="a" style="left:223px;top:464px;width:18px;height:29px;background:#6d3536;"></div>
<div class="a" style="left:242px;top:464px;width:18px;height:29px;background:#6d3536;"></div>
<div class="a" style="left:261px;top:464px;width:18px;height:29px;background:#6d3536;"></div>
<div class="a" style="left:280px;top:464px;width:20px;height:29px;background:#6d3536;"></div>
<div class="a" style="left:39px;top:474px;width:1px;height:9px;background:#555;"></div>
<svg class="a" style="left:69px;top:474px;" width="9" height="9" viewBox="0 0 9 9"><path d="M0.5 0v8.5H9" fill="none" stroke="#555"/></svg>
<div class="a" style="left:87px;top:467px;width:25px;height:25px;border:1px solid #2a2a2a;background:repeating-conic-gradient(#d9d9d9 0 25%,#fff 0 50%) 0 0/8px 8px"></div>
<div class="a" style="left:95px;top:479px;width:9px;height:3px;border-radius:50%;background:#1050e0"></div>
<svg class="a" style="left:117px;top:466px;" width="12" height="11" viewBox="0 0 12 11"><path d="M1.5 0.5H10.5V6.5L7.5 9.5H2.5V5.5" fill="none" stroke="#dcdcdc" stroke-width="1"/><path d="M7.5 9.5V6.5H10.5" fill="none" stroke="#dcdcdc"/><path d="M0.3 1.5L6 7" stroke="#dcdcdc" stroke-width="1.3"/></svg>
<svg class="a" style="left:116px;top:482px;" width="13" height="9" viewBox="0 0 13 9"><rect x="0.75" y="0.75" width="11.5" height="7.5" fill="none" stroke="#dcdcdc" stroke-width="1.5"/><path d="M5 2.5v4l3-2z" fill="#dcdcdc"/></svg>
<div class="t" style="left:130px;top:474px;font-size:11px;line-height:11px;color:#e0e0e0;letter-spacing:0.35px">Shadow</div>
<svg class="a" style="left:245px;top:471px;" width="13" height="15" viewBox="0 0 13 15"><rect x="0" y="6" width="12" height="8" fill="rgba(255,255,255,0.30)"/><path d="M6.5 0.8A4 5 0 0 1 10.5 6" fill="none" stroke="rgba(255,255,255,0.30)" stroke-width="1.6"/></svg>
<svg class="a" style="left:262px;top:472px" width="15" height="12" viewBox="0 0 15 13"><path d="M9.8 5.5C9 2.2 7.3 1 5.6 1 2.8 1 1.1 4.5 1.1 7.6 1.1 10.2 2.6 11.6 4.6 11.3 7.4 10.9 10 5.5 12.8 1.2M9.6 6.2C9.9 9 11 11.2 13.3 11.4" fill="none" stroke="rgba(255,255,255,0.30)" stroke-width="2.1"/></svg>
<svg class="a" style="left:281px;top:471px;" width="15" height="15" viewBox="0 0 15 15"><rect x="0" y="0" width="5" height="5" fill="rgba(255,255,255,0.12)"/><rect x="5" y="0" width="5" height="5" fill="rgba(255,255,255,0.28)"/><rect x="10" y="0" width="5" height="5" fill="rgba(255,255,255,0.12)"/><rect x="0" y="5" width="5" height="5" fill="rgba(255,255,255,0.28)"/><rect x="5" y="5" width="5" height="5" fill="rgba(255,255,255,0.12)"/><rect x="10" y="5" width="5" height="5" fill="rgba(255,255,255,0.28)"/><rect x="0" y="10" width="5" height="5" fill="rgba(255,255,255,0.12)"/><rect x="5" y="10" width="5" height="5" fill="rgba(255,255,255,0.28)"/><rect x="10" y="10" width="5" height="5" fill="rgba(255,255,255,0.12)"/></svg>
<svg class="a" style="left:224px;top:471px;" width="16" height="16" viewBox="0 0 16 16"><g stroke="#e8e8e8" stroke-width="1"><path d="M8 0v2M2 3l1.4 1.4M14 3l-1.4 1.4M0 8h2M14 8h2"/></g><path d="M6.3 11C4.6 9.3 4.3 8.2 4.3 6.8A3.7 3.7 0 0 1 11.7 6.8C11.7 8.2 11.4 9.3 9.7 11z" fill="#e8e8e8"/><path d="M6.3 11.6h3.4l-.6 2.6h-2.2z" fill="#e8e8e8"/></svg>
<div class="a" style="left:1px;top:493px;width:299px;height:1px;background:#343434;"></div>
<svg class="a" style="left:6px;top:502px;" width="15" height="14" viewBox="0 0 15 14"><path d="M0.8 7.2C2.5 -0.6 12.5 -0.6 14.2 7.2" fill="none" stroke="#d8d8d8" stroke-width="1.5"/><circle cx="7.5" cy="4.8" r="3.4" fill="#d8d8d8"/><path d="M1.3 9C4 13.5 11 13.5 13.7 9" fill="none" stroke="#d8d8d8" stroke-width="1.3"/></svg>
<div class="a" style="left:25px;top:494px;width:29px;height:29px;background:#52708e;"></div>
<div class="a" style="left:55px;top:494px;width:14px;height:29px;background:#52708e;"></div>
<div class="a" style="left:70px;top:494px;width:171px;height:29px;background:#52708e;"></div>
<div class="a" style="left:242px;top:494px;width:18px;height:29px;background:#52708e;"></div>
<div class="a" style="left:261px;top:494px;width:18px;height:29px;background:#52708e;"></div>
<div class="a" style="left:280px;top:494px;width:20px;height:29px;background:#52708e;"></div>
<div class="a" style="left:27px;top:497px;width:25px;height:25px;border:1px solid #2a2a2a;background:repeating-conic-gradient(#d9d9d9 0 25%,#fff 0 50%) 0 0/8px 8px"></div>
<div class="a" style="left:34px;top:504px;width:10px;height:11px;border-radius:50%;background:#ff7000"></div>
<svg class="a" style="left:57px;top:496px;" width="11" height="11" viewBox="0 0 11 11"><path d="M0.5 2.5h10v8h-10z" fill="none" stroke="#dcdcdc"/><path d="M0.5 0.5h4l1.5 2" fill="none" stroke="#dcdcdc"/><path d="M0.5 4.5h10" stroke="#dcdcdc"/></svg>
<svg class="a" style="left:57px;top:513px;" width="11" height="7" viewBox="0 0 11 7"><path d="M0.7 0.7L5.5 5.5 10.3 0.7" fill="none" stroke="#dcdcdc" stroke-width="1.5"/></svg>
<div class="t" style="left:70px;top:503px;font-size:12px;line-height:12px;color:#e8e8e8;letter-spacing:0px">Coloring</div>
<svg class="a" style="left:245px;top:501px;" width="13" height="15" viewBox="0 0 13 15"><rect x="0" y="6" width="12" height="8" fill="rgba(255,255,255,0.30)"/><path d="M6.5 0.8A4 5 0 0 1 10.5 6" fill="none" stroke="rgba(255,255,255,0.30)" stroke-width="1.6"/></svg>
<svg class="a" style="left:262px;top:502px" width="15" height="12" viewBox="0 0 15 13"><path d="M9.8 5.5C9 2.2 7.3 1 5.6 1 2.8 1 1.1 4.5 1.1 7.6 1.1 10.2 2.6 11.6 4.6 11.3 7.4 10.9 10 5.5 12.8 1.2M9.6 6.2C9.9 9 11 11.2 13.3 11.4" fill="none" stroke="rgba(255,255,255,0.30)" stroke-width="2.1"/></svg>
<svg class="a" style="left:281px;top:503px;" width="15" height="12" viewBox="0 0 15 12"><g fill="rgba(255,255,255,0.32)"><rect x="0" y="0" width="7" height="3"/><rect x="8" y="0" width="7" height="3"/><rect x="0" y="4" width="3" height="3"/><rect x="4" y="4" width="7" height="3"/><rect x="12" y="4" width="3" height="3"/><rect x="0" y="8" width="7" height="3"/><rect x="8" y="8" width="7" height="3"/></g></svg>
<div class="a" style="left:1px;top:523px;width:299px;height:1px;background:#343434;"></div>
<svg class="a" style="left:6px;top:532px;" width="15" height="14" viewBox="0 0 15 14"><path d="M0.8 7.2C2.5 -0.6 12.5 -0.6 14.2 7.2" fill="none" stroke="#d8d8d8" stroke-width="1.5"/><circle cx="7.5" cy="4.8" r="3.4" fill="#d8d8d8"/><path d="M1.3 9C4 13.5 11 13.5 13.7 9" fill="none" stroke="#d8d8d8" stroke-width="1.3"/></svg>
<div class="a" style="left:24px;top:524px;width:1px;height:29px;background:#3d3d3d;"></div>
<div class="a" style="left:54px;top:524px;width:1px;height:29px;background:#3d3d3d;"></div>
<div class="a" style="left:84px;top:524px;width:1px;height:29px;background:#3d3d3d;"></div>
<div class="a" style="left:99px;top:524px;width:1px;height:29px;background:#3d3d3d;"></div>
<div class="a" style="left:241px;top:524px;width:1px;height:29px;background:#3d3d3d;"></div>
<div class="a" style="left:260px;top:524px;width:1px;height:29px;background:#3d3d3d;"></div>
<div class="a" style="left:279px;top:524px;width:1px;height:29px;background:#3d3d3d;"></div>
<svg class="a" style="left:39px;top:534px;" width="9" height="9" viewBox="0 0 9 9"><path d="M0.5 0v8.5H9" fill="none" stroke="#555"/></svg>
<div class="a" style="left:59px;top:527px;width:21px;height:24px;background:repeating-conic-gradient(#d9d9d9 0 25%,#fff 0 50%) 0 0/8px 8px"></div>
<div class="a" style="left:65px;top:535px;width:9px;height:10px;border-radius:50%;background:#ff7000"></div>
<svg class="a" style="left:87px;top:526px;" width="12" height="11" viewBox="0 0 12 11"><path d="M1.5 0.5H10.5V6.5L7.5 9.5H2.5V5.5" fill="none" stroke="#dcdcdc" stroke-width="1"/><path d="M7.5 9.5V6.5H10.5" fill="none" stroke="#dcdcdc"/><path d="M0.3 1.5L6 7" stroke="#dcdcdc" stroke-width="1.3"/></svg>
<svg class="a" style="left:86px;top:542px;" width="13" height="9" viewBox="0 0 13 9"><rect x="0.75" y="0.75" width="11.5" height="7.5" fill="none" stroke="#dcdcdc" stroke-width="1.5"/><path d="M5 2.5v4l3-2z" fill="#dcdcdc"/></svg>
<div class="t" style="left:100px;top:533px;font-size:12px;line-height:12px;color:#e0e0e0;letter-spacing:-0.2px">Capa de pintura 1</div>
<svg class="a" style="left:245px;top:531px;" width="13" height="15" viewBox="0 0 13 15"><rect x="0" y="6" width="12" height="8" fill="rgba(255,255,255,0.30)"/><path d="M6.5 0.8A4 5 0 0 1 10.5 6" fill="none" stroke="rgba(255,255,255,0.30)" stroke-width="1.6"/></svg>
<svg class="a" style="left:262px;top:532px" width="15" height="12" viewBox="0 0 15 13"><path d="M9.8 5.5C9 2.2 7.3 1 5.6 1 2.8 1 1.1 4.5 1.1 7.6 1.1 10.2 2.6 11.6 4.6 11.3 7.4 10.9 10 5.5 12.8 1.2M9.6 6.2C9.9 9 11 11.2 13.3 11.4" fill="none" stroke="rgba(255,255,255,0.30)" stroke-width="2.1"/></svg>
<svg class="a" style="left:281px;top:531px;" width="15" height="15" viewBox="0 0 15 15"><rect x="0" y="0" width="5" height="5" fill="rgba(255,255,255,0.12)"/><rect x="5" y="0" width="5" height="5" fill="rgba(255,255,255,0.28)"/><rect x="10" y="0" width="5" height="5" fill="rgba(255,255,255,0.12)"/><rect x="0" y="5" width="5" height="5" fill="rgba(255,255,255,0.28)"/><rect x="5" y="5" width="5" height="5" fill="rgba(255,255,255,0.12)"/><rect x="10" y="5" width="5" height="5" fill="rgba(255,255,255,0.28)"/><rect x="0" y="10" width="5" height="5" fill="rgba(255,255,255,0.12)"/><rect x="5" y="10" width="5" height="5" fill="rgba(255,255,255,0.28)"/><rect x="10" y="10" width="5" height="5" fill="rgba(255,255,255,0.12)"/></svg>
<svg class="a" style="left:224px;top:531px;" width="16" height="16" viewBox="0 0 16 16"><path d="M6.3 11C4.6 9.3 4.3 8.2 4.3 6.8A3.7 3.7 0 0 1 11.7 6.8C11.7 8.2 11.4 9.3 9.7 11z" fill="rgba(255,255,255,0.30)"/><path d="M6.3 11.6h3.4l-.6 2.6h-2.2z" fill="rgba(255,255,255,0.30)"/></svg>
<div class="a" style="left:1px;top:553px;width:299px;height:1px;background:#343434;"></div>
<svg class="a" style="left:6px;top:562px;" width="15" height="14" viewBox="0 0 15 14"><ellipse cx="7.5" cy="6.5" rx="6.3" ry="5.6" fill="none" stroke="#666" stroke-width="1"/><path d="M1.5 9C4 13 11 13 13.5 9" fill="none" stroke="#707070" stroke-width="1.3"/></svg>
<div class="a" style="left:24px;top:554px;width:1px;height:29px;background:#3d3d3d;"></div>
<div class="a" style="left:54px;top:554px;width:1px;height:29px;background:#3d3d3d;"></div>
<div class="a" style="left:69px;top:554px;width:1px;height:29px;background:#3d3d3d;"></div>
<div class="a" style="left:241px;top:554px;width:1px;height:29px;background:#3d3d3d;"></div>
<div class="a" style="left:260px;top:554px;width:1px;height:29px;background:#3d3d3d;"></div>
<div class="a" style="left:279px;top:554px;width:1px;height:29px;background:#3d3d3d;"></div>
<div class="a" style="left:28px;top:558px;width:23px;height:23px;background:repeating-conic-gradient(#7a7a7a 0 25%,#8c8c8c 0 50%) 0 0/8px 8px"></div>
<svg class="a" style="left:57px;top:556px;" width="11" height="11" viewBox="0 0 11 11"><path d="M0.5 2.5h10v8h-10z" fill="none" stroke="#9a9a9a"/><path d="M0.5 0.5h4l1.5 2" fill="none" stroke="#9a9a9a"/><path d="M0.5 4.5h10" stroke="#9a9a9a"/></svg>
<svg class="a" style="left:57px;top:573px;" width="11" height="7" viewBox="0 0 11 7"><path d="M0.7 0.7L5.5 5.5 10.3 0.7" fill="none" stroke="#9a9a9a" stroke-width="1.5"/></svg>
<div class="t" style="left:70px;top:563px;font-size:12px;line-height:12px;color:#9c9c9c;letter-spacing:0px">Keys</div>
<svg class="a" style="left:245px;top:561px;" width="13" height="15" viewBox="0 0 13 15"><rect x="0" y="6" width="12" height="8" fill="rgba(255,255,255,0.30)"/><path d="M6.5 0.8A4 5 0 0 1 10.5 6" fill="none" stroke="rgba(255,255,255,0.30)" stroke-width="1.6"/></svg>
<svg class="a" style="left:262px;top:562px" width="15" height="12" viewBox="0 0 15 13"><path d="M9.8 5.5C9 2.2 7.3 1 5.6 1 2.8 1 1.1 4.5 1.1 7.6 1.1 10.2 2.6 11.6 4.6 11.3 7.4 10.9 10 5.5 12.8 1.2M9.6 6.2C9.9 9 11 11.2 13.3 11.4" fill="none" stroke="rgba(255,255,255,0.30)" stroke-width="2.1"/></svg>
<svg class="a" style="left:281px;top:563px;" width="15" height="12" viewBox="0 0 15 12"><g fill="rgba(255,255,255,0.32)"><rect x="0" y="0" width="7" height="3"/><rect x="8" y="0" width="7" height="3"/><rect x="0" y="4" width="3" height="3"/><rect x="4" y="4" width="7" height="3"/><rect x="12" y="4" width="3" height="3"/><rect x="0" y="8" width="7" height="3"/><rect x="8" y="8" width="7" height="3"/></g></svg>
<div class="a" style="left:1px;top:583px;width:299px;height:1px;background:#343434;"></div>
<svg class="a" style="left:6px;top:592px;" width="15" height="14" viewBox="0 0 15 14"><ellipse cx="7.5" cy="6.5" rx="6.3" ry="5.6" fill="none" stroke="#666" stroke-width="1"/><path d="M1.5 9C4 13 11 13 13.5 9" fill="none" stroke="#707070" stroke-width="1.3"/></svg>
<div class="a" style="left:24px;top:584px;width:1px;height:29px;background:#3d3d3d;"></div>
<div class="a" style="left:54px;top:584px;width:1px;height:29px;background:#3d3d3d;"></div>
<div class="a" style="left:84px;top:584px;width:1px;height:29px;background:#3d3d3d;"></div>
<div class="a" style="left:99px;top:584px;width:1px;height:29px;background:#3d3d3d;"></div>
<div class="a" style="left:241px;top:584px;width:1px;height:29px;background:#3d3d3d;"></div>
<div class="a" style="left:260px;top:584px;width:1px;height:29px;background:#3d3d3d;"></div>
<div class="a" style="left:279px;top:584px;width:1px;height:29px;background:#3d3d3d;"></div>
<svg class="a" style="left:39px;top:594px;" width="9" height="9" viewBox="0 0 9 9"><path d="M0.5 0v8.5H9" fill="none" stroke="#555"/></svg>
<div class="a" style="left:62px;top:588px;width:16px;height:23px;background:repeating-conic-gradient(#7a7a7a 0 25%,#8c8c8c 0 50%) 0 0/8px 8px"></div>
<div class="a" style="left:69px;top:593px;width:2px;height:1px;background:#c06060;"></div>
<div class="a" style="left:68px;top:606px;width:4px;height:1px;background:#5070c0;"></div>
<svg class="a" style="left:87px;top:586px;" width="11" height="11" viewBox="0 0 11 11"><path d="M0.5 2.5h10v8h-10z" fill="none" stroke="#9a9a9a"/><path d="M0.5 0.5h4l1.5 2" fill="none" stroke="#9a9a9a"/><path d="M0.5 4.5h10" stroke="#9a9a9a"/></svg>
<svg class="a" style="left:87px;top:603px;" width="11" height="7" viewBox="0 0 11 7"><path d="M0.7 0.7L5.5 5.5 10.3 0.7" fill="none" stroke="#9a9a9a" stroke-width="1.5"/></svg>
<div class="t" style="left:100px;top:593px;font-size:12px;line-height:12px;color:#a8a8a8;letter-spacing:0px">A</div>
<svg class="a" style="left:245px;top:591px;" width="13" height="15" viewBox="0 0 13 15"><rect x="0" y="6" width="12" height="8" fill="rgba(255,255,255,0.30)"/><path d="M6.5 0.8A4 5 0 0 1 10.5 6" fill="none" stroke="rgba(255,255,255,0.30)" stroke-width="1.6"/></svg>
<svg class="a" style="left:262px;top:592px" width="15" height="12" viewBox="0 0 15 13"><path d="M9.8 5.5C9 2.2 7.3 1 5.6 1 2.8 1 1.1 4.5 1.1 7.6 1.1 10.2 2.6 11.6 4.6 11.3 7.4 10.9 10 5.5 12.8 1.2M9.6 6.2C9.9 9 11 11.2 13.3 11.4" fill="none" stroke="rgba(255,255,255,0.30)" stroke-width="2.1"/></svg>
<svg class="a" style="left:281px;top:593px;" width="15" height="12" viewBox="0 0 15 12"><g fill="rgba(255,255,255,0.32)"><rect x="0" y="0" width="7" height="3"/><rect x="8" y="0" width="7" height="3"/><rect x="0" y="4" width="3" height="3"/><rect x="4" y="4" width="7" height="3"/><rect x="12" y="4" width="3" height="3"/><rect x="0" y="8" width="7" height="3"/><rect x="8" y="8" width="7" height="3"/></g></svg>
<div class="a" style="left:1px;top:613px;width:299px;height:1px;background:#343434;"></div>
<svg class="a" style="left:6px;top:622px;" width="15" height="14" viewBox="0 0 15 14"><path d="M0.8 7.2C2.5 -0.6 12.5 -0.6 14.2 7.2" fill="none" stroke="#d8d8d8" stroke-width="1.5"/><circle cx="7.5" cy="4.8" r="3.4" fill="#d8d8d8"/><path d="M1.3 9C4 13.5 11 13.5 13.7 9" fill="none" stroke="#d8d8d8" stroke-width="1.3"/></svg>
<div class="a" style="left:24px;top:614px;width:1px;height:29px;background:#3d3d3d;"></div>
<div class="a" style="left:54px;top:614px;width:1px;height:29px;background:#3d3d3d;"></div>
<div class="a" style="left:84px;top:614px;width:1px;height:29px;background:#3d3d3d;"></div>
<div class="a" style="left:114px;top:614px;width:1px;height:29px;background:#3d3d3d;"></div>
<div class="a" style="left:129px;top:614px;width:1px;height:29px;background:#3d3d3d;"></div>
<div class="a" style="left:241px;top:614px;width:1px;height:29px;background:#3d3d3d;"></div>
<div class="a" style="left:260px;top:614px;width:1px;height:29px;background:#3d3d3d;"></div>
<div class="a" style="left:279px;top:614px;width:1px;height:29px;background:#3d3d3d;"></div>
<div class="a" style="left:39px;top:624px;width:1px;height:9px;background:#555;"></div>
<svg class="a" style="left:69px;top:624px;" width="9" height="9" viewBox="0 0 9 9"><path d="M0.5 0v8.5H9" fill="none" stroke="#555"/></svg>
<div class="a" style="left:88px;top:618px;width:23px;height:23px;background:repeating-conic-gradient(#7a7a7a 0 25%,#8c8c8c 0 50%) 0 0/8px 8px"></div>
<div class="a" style="left:90px;top:620px;width:19px;height:19px;border-radius:50%;border:1px dotted #555"></div>
<svg class="a" style="left:117px;top:616px;" width="12" height="11" viewBox="0 0 12 11"><path d="M1.5 0.5H10.5V6.5L7.5 9.5H2.5V5.5" fill="none" stroke="#a8a8a8" stroke-width="1"/><path d="M7.5 9.5V6.5H10.5" fill="none" stroke="#a8a8a8"/><path d="M0.3 1.5L6 7" stroke="#a8a8a8" stroke-width="1.3"/></svg>
<svg class="a" style="left:116px;top:632px;" width="13" height="9" viewBox="0 0 13 9"><rect x="0.75" y="0.75" width="11.5" height="7.5" fill="none" stroke="#a8a8a8" stroke-width="1.5"/><path d="M5 2.5v4l3-2z" fill="#a8a8a8"/></svg>
<div class="t" style="left:130px;top:624px;font-size:11px;line-height:11px;color:#b4b4b4;letter-spacing:-0.1px">Blaack</div>
<svg class="a" style="left:245px;top:621px;" width="13" height="15" viewBox="0 0 13 15"><rect x="0" y="6" width="12" height="8" fill="rgba(255,255,255,0.30)"/><path d="M6.5 0.8A4 5 0 0 1 10.5 6" fill="none" stroke="rgba(255,255,255,0.30)" stroke-width="1.6"/></svg>
<svg class="a" style="left:262px;top:622px" width="15" height="12" viewBox="0 0 15 13"><path d="M9.8 5.5C9 2.2 7.3 1 5.6 1 2.8 1 1.1 4.5 1.1 7.6 1.1 10.2 2.6 11.6 4.6 11.3 7.4 10.9 10 5.5 12.8 1.2M9.6 6.2C9.9 9 11 11.2 13.3 11.4" fill="none" stroke="rgba(255,255,255,0.30)" stroke-width="2.1"/></svg>
<svg class="a" style="left:281px;top:621px;" width="15" height="15" viewBox="0 0 15 15"><rect x="0" y="0" width="5" height="5" fill="rgba(255,255,255,0.12)"/><rect x="5" y="0" width="5" height="5" fill="rgba(255,255,255,0.28)"/><rect x="10" y="0" width="5" height="5" fill="rgba(255,255,255,0.12)"/><rect x="0" y="5" width="5" height="5" fill="rgba(255,255,255,0.28)"/><rect x="5" y="5" width="5" height="5" fill="rgba(255,255,255,0.12)"/><rect x="10" y="5" width="5" height="5" fill="rgba(255,255,255,0.28)"/><rect x="0" y="10" width="5" height="5" fill="rgba(255,255,255,0.12)"/><rect x="5" y="10" width="5" height="5" fill="rgba(255,255,255,0.28)"/><rect x="10" y="10" width="5" height="5" fill="rgba(255,255,255,0.12)"/></svg>
<svg class="a" style="left:224px;top:621px;" width="16" height="16" viewBox="0 0 16 16"><g stroke="#e8e8e8" stroke-width="1"><path d="M8 0v2M2 3l1.4 1.4M14 3l-1.4 1.4M0 8h2M14 8h2"/></g><path d="M6.3 11C4.6 9.3 4.3 8.2 4.3 6.8A3.7 3.7 0 0 1 11.7 6.8C11.7 8.2 11.4 9.3 9.7 11z" fill="#e8e8e8"/><path d="M6.3 11.6h3.4l-.6 2.6h-2.2z" fill="#e8e8e8"/></svg>
<div class="a" style="left:1px;top:643px;width:299px;height:1px;background:#343434;"></div>
<svg class="a" style="left:6px;top:652px;" width="15" height="14" viewBox="0 0 15 14"><path d="M0.8 7.2C2.5 -0.6 12.5 -0.6 14.2 7.2" fill="none" stroke="#d8d8d8" stroke-width="1.5"/><circle cx="7.5" cy="4.8" r="3.4" fill="#d8d8d8"/><path d="M1.3 9C4 13.5 11 13.5 13.7 9" fill="none" stroke="#d8d8d8" stroke-width="1.3"/></svg>
<div class="a" style="left:85px;top:644px;width:29px;height:29px;background:#604a6a;"></div>
<div class="a" style="left:115px;top:644px;width:14px;height:29px;background:#604a6a;"></div>
<div class="a" style="left:130px;top:644px;width:92px;height:29px;background:#604a6a;"></div>
<div class="a" style="left:223px;top:644px;width:18px;height:29px;background:#604a6a;"></div>
<div class="a" style="left:242px;top:644px;width:18px;height:29px;background:#604a6a;"></div>
<div class="a" style="left:261px;top:644px;width:18px;height:29px;background:#604a6a;"></div>
<div class="a" style="left:280px;top:644px;width:20px;height:29px;background:#604a6a;"></div>
<div class="a" style="left:39px;top:654px;width:1px;height:9px;background:#555;"></div>
<svg class="a" style="left:69px;top:654px;" width="9" height="9" viewBox="0 0 9 9"><path d="M0.5 0v8.5H9" fill="none" stroke="#555"/></svg>
<div class="a" style="left:87px;top:647px;width:25px;height:25px;border:1px solid #2a2a2a;background:repeating-conic-gradient(#a08aa8 0 25%,#b29cb8 0 50%) 0 0/8px 8px"></div>
<div class="a" style="left:97px;top:656px;width:6px;height:5px;border-radius:50%;background:#d04060"></div>
<svg class="a" style="left:117px;top:646px;" width="12" height="11" viewBox="0 0 12 11"><path d="M1.5 0.5H10.5V6.5L7.5 9.5H2.5V5.5" fill="none" stroke="#a8a8a8" stroke-width="1"/><path d="M7.5 9.5V6.5H10.5" fill="none" stroke="#a8a8a8"/><path d="M0.3 1.5L6 7" stroke="#a8a8a8" stroke-width="1.3"/></svg>
<svg class="a" style="left:116px;top:662px;" width="13" height="9" viewBox="0 0 13 9"><rect x="0.75" y="0.75" width="11.5" height="7.5" fill="none" stroke="#a8a8a8" stroke-width="1.5"/><path d="M5 2.5v4l3-2z" fill="#a8a8a8"/></svg>
<div class="t" style="left:130px;top:654px;font-size:11px;line-height:11px;color:#b8b0bc;letter-spacing:0.35px">Red</div>
<svg class="a" style="left:245px;top:651px;" width="13" height="15" viewBox="0 0 13 15"><rect x="0" y="6" width="12" height="8" fill="rgba(255,255,255,0.30)"/><path d="M6.5 0.8A4 5 0 0 1 10.5 6" fill="none" stroke="rgba(255,255,255,0.30)" stroke-width="1.6"/></svg>
<svg class="a" style="left:262px;top:652px" width="15" height="12" viewBox="0 0 15 13"><path d="M9.8 5.5C9 2.2 7.3 1 5.6 1 2.8 1 1.1 4.5 1.1 7.6 1.1 10.2 2.6 11.6 4.6 11.3 7.4 10.9 10 5.5 12.8 1.2M9.6 6.2C9.9 9 11 11.2 13.3 11.4" fill="none" stroke="rgba(255,255,255,0.30)" stroke-width="2.1"/></svg>
<svg class="a" style="left:281px;top:651px;" width="15" height="15" viewBox="0 0 15 15"><rect x="0" y="0" width="5" height="5" fill="rgba(255,255,255,0.12)"/><rect x="5" y="0" width="5" height="5" fill="rgba(255,255,255,0.28)"/><rect x="10" y="0" width="5" height="5" fill="rgba(255,255,255,0.12)"/><rect x="0" y="5" width="5" height="5" fill="rgba(255,255,255,0.28)"/><rect x="5" y="5" width="5" height="5" fill="rgba(255,255,255,0.12)"/><rect x="10" y="5" width="5" height="5" fill="rgba(255,255,255,0.28)"/><rect x="0" y="10" width="5" height="5" fill="rgba(255,255,255,0.12)"/><rect x="5" y="10" width="5" height="5" fill="rgba(255,255,255,0.28)"/><rect x="10" y="10" width="5" height="5" fill="rgba(255,255,255,0.12)"/></svg>
<svg class="a" style="left:224px;top:651px;" width="16" height="16" viewBox="0 0 16 16"><path d="M6.3 11C4.6 9.3 4.3 8.2 4.3 6.8A3.7 3.7 0 0 1 11.7 6.8C11.7 8.2 11.4 9.3 9.7 11z" fill="rgba(255,255,255,0.30)"/><path d="M6.3 11.6h3.4l-.6 2.6h-2.2z" fill="rgba(255,255,255,0.30)"/></svg>
<div class="a" style="left:1px;top:673px;width:299px;height:1px;background:#343434;"></div>
<svg class="a" style="left:6px;top:682px;" width="15" height="14" viewBox="0 0 15 14"><path d="M0.8 7.2C2.5 -0.6 12.5 -0.6 14.2 7.2" fill="none" stroke="#d8d8d8" stroke-width="1.5"/><circle cx="7.5" cy="4.8" r="3.4" fill="#d8d8d8"/><path d="M1.3 9C4 13.5 11 13.5 13.7 9" fill="none" stroke="#d8d8d8" stroke-width="1.3"/></svg>
<div class="a" style="left:85px;top:674px;width:29px;height:29px;background:#755b3a;"></div>
<div class="a" style="left:115px;top:674px;width:14px;height:29px;background:#755b3a;"></div>
<div class="a" style="left:130px;top:674px;width:111px;height:29px;background:#755b3a;"></div>
<div class="a" style="left:242px;top:674px;width:18px;height:29px;background:#755b3a;"></div>
<div class="a" style="left:261px;top:674px;width:18px;height:29px;background:#755b3a;"></div>
<div class="a" style="left:280px;top:674px;width:20px;height:29px;background:#755b3a;"></div>
<div class="a" style="left:39px;top:684px;width:1px;height:9px;background:#555;"></div>
<svg class="a" style="left:69px;top:684px;" width="9" height="9" viewBox="0 0 9 9"><path d="M0.5 0v8.5H9" fill="none" stroke="#555"/></svg>
<div class="a" style="left:87px;top:677px;width:25px;height:25px;border:1px solid #2a2a2a;background:repeating-conic-gradient(#b8a080 0 25%,#c8b090 0 50%) 0 0/8px 8px"></div>
<svg class="a" style="left:117px;top:676px;" width="12" height="11" viewBox="0 0 12 11"><path d="M1.5 0.5H10.5V6.5L7.5 9.5H2.5V5.5" fill="none" stroke="#a8a8a8" stroke-width="1"/><path d="M7.5 9.5V6.5H10.5" fill="none" stroke="#a8a8a8"/><path d="M0.3 1.5L6 7" stroke="#a8a8a8" stroke-width="1.3"/></svg>
<div class="t" style="left:130px;top:684px;font-size:11px;line-height:11px;color:#c4b8a8;letter-spacing:0.35px">Green</div>
<svg class="a" style="left:245px;top:681px;" width="13" height="15" viewBox="0 0 13 15"><rect x="0" y="6" width="12" height="8" fill="rgba(255,255,255,0.30)"/><path d="M6.5 0.8A4 5 0 0 1 10.5 6" fill="none" stroke="rgba(255,255,255,0.30)" stroke-width="1.6"/></svg>
<svg class="a" style="left:262px;top:682px" width="15" height="12" viewBox="0 0 15 13"><path d="M9.8 5.5C9 2.2 7.3 1 5.6 1 2.8 1 1.1 4.5 1.1 7.6 1.1 10.2 2.6 11.6 4.6 11.3 7.4 10.9 10 5.5 12.8 1.2M9.6 6.2C9.9 9 11 11.2 13.3 11.4" fill="none" stroke="rgba(255,255,255,0.30)" stroke-width="2.1"/></svg>
<svg class="a" style="left:281px;top:681px;" width="15" height="15" viewBox="0 0 15 15"><rect x="0" y="0" width="5" height="5" fill="rgba(255,255,255,0.12)"/><rect x="5" y="0" width="5" height="5" fill="rgba(255,255,255,0.28)"/><rect x="10" y="0" width="5" height="5" fill="rgba(255,255,255,0.12)"/><rect x="0" y="5" width="5" height="5" fill="rgba(255,255,255,0.28)"/><rect x="5" y="5" width="5" height="5" fill="rgba(255,255,255,0.12)"/><rect x="10" y="5" width="5" height="5" fill="rgba(255,255,255,0.28)"/><rect x="0" y="10" width="5" height="5" fill="rgba(255,255,255,0.12)"/><rect x="5" y="10" width="5" height="5" fill="rgba(255,255,255,0.28)"/><rect x="10" y="10" width="5" height="5" fill="rgba(255,255,255,0.12)"/></svg>
<div class="a" style="left:1px;top:703px;width:299px;height:1px;background:#343434;"></div>
<svg class="a" style="left:6px;top:712px;" width="15" height="14" viewBox="0 0 15 14"><ellipse cx="7.5" cy="6.5" rx="6.3" ry="5.6" fill="none" stroke="#666" stroke-width="1"/><path d="M1.5 9C4 13 11 13 13.5 9" fill="none" stroke="#707070" stroke-width="1.3"/></svg>
<div class="a" style="left:85px;top:704px;width:29px;height:29px;background:#5b4637;"></div>
<div class="a" style="left:115px;top:704px;width:14px;height:29px;background:#5b4637;"></div>
<div class="a" style="left:130px;top:704px;width:92px;height:29px;background:#5b4637;"></div>
<div class="a" style="left:223px;top:704px;width:18px;height:29px;background:#5b4637;"></div>
<div class="a" style="left:242px;top:704px;width:18px;height:29px;background:#5b4637;"></div>
<div class="a" style="left:261px;top:704px;width:18px;height:29px;background:#5b4637;"></div>
<div class="a" style="left:280px;top:704px;width:20px;height:29px;background:#5b4637;"></div>
<div class="a" style="left:39px;top:714px;width:1px;height:9px;background:#555;"></div>
<svg class="a" style="left:69px;top:714px;" width="9" height="9" viewBox="0 0 9 9"><path d="M0.5 0v8.5H9" fill="none" stroke="#555"/></svg>
<div class="a" style="left:87px;top:707px;width:25px;height:25px;border:1px solid #2a2a2a;background:repeating-conic-gradient(#8a7a70 0 25%,#9a8a80 0 50%) 0 0/8px 8px"></div>
<div class="a" style="left:96px;top:718px;width:7px;height:3px;border-radius:50%;background:#5070c0"></div>
<svg class="a" style="left:117px;top:706px;" width="12" height="11" viewBox="0 0 12 11"><path d="M1.5 0.5H10.5V6.5L7.5 9.5H2.5V5.5" fill="none" stroke="#a8a8a8" stroke-width="1"/><path d="M7.5 9.5V6.5H10.5" fill="none" stroke="#a8a8a8"/><path d="M0.3 1.5L6 7" stroke="#a8a8a8" stroke-width="1.3"/></svg>
<svg class="a" style="left:116px;top:722px;" width="13" height="9" viewBox="0 0 13 9"><rect x="0.75" y="0.75" width="11.5" height="7.5" fill="none" stroke="#a8a8a8" stroke-width="1.5"/><path d="M5 2.5v4l3-2z" fill="#a8a8a8"/></svg>
<div class="t" style="left:130px;top:714px;font-size:11px;line-height:11px;color:#b4aaa4;letter-spacing:0.35px">Blue</div>
<svg class="a" style="left:245px;top:711px;" width="13" height="15" viewBox="0 0 13 15"><rect x="0" y="6" width="12" height="8" fill="rgba(255,255,255,0.30)"/><path d="M6.5 0.8A4 5 0 0 1 10.5 6" fill="none" stroke="rgba(255,255,255,0.30)" stroke-width="1.6"/></svg>
<svg class="a" style="left:262px;top:712px" width="15" height="12" viewBox="0 0 15 13"><path d="M9.8 5.5C9 2.2 7.3 1 5.6 1 2.8 1 1.1 4.5 1.1 7.6 1.1 10.2 2.6 11.6 4.6 11.3 7.4 10.9 10 5.5 12.8 1.2M9.6 6.2C9.9 9 11 11.2 13.3 11.4" fill="none" stroke="rgba(255,255,255,0.30)" stroke-width="2.1"/></svg>
<svg class="a" style="left:281px;top:711px;" width="15" height="15" viewBox="0 0 15 15"><rect x="0" y="0" width="5" height="5" fill="rgba(255,255,255,0.12)"/><rect x="5" y="0" width="5" height="5" fill="rgba(255,255,255,0.28)"/><rect x="10" y="0" width="5" height="5" fill="rgba(255,255,255,0.12)"/><rect x="0" y="5" width="5" height="5" fill="rgba(255,255,255,0.28)"/><rect x="5" y="5" width="5" height="5" fill="rgba(255,255,255,0.12)"/><rect x="10" y="5" width="5" height="5" fill="rgba(255,255,255,0.28)"/><rect x="0" y="10" width="5" height="5" fill="rgba(255,255,255,0.12)"/><rect x="5" y="10" width="5" height="5" fill="rgba(255,255,255,0.28)"/><rect x="10" y="10" width="5" height="5" fill="rgba(255,255,255,0.12)"/></svg>
<svg class="a" style="left:224px;top:711px;" width="16" height="16" viewBox="0 0 16 16"><path d="M6.3 11C4.6 9.3 4.3 8.2 4.3 6.8A3.7 3.7 0 0 1 11.7 6.8C11.7 8.2 11.4 9.3 9.7 11z" fill="rgba(255,255,255,0.30)"/><path d="M6.3 11.6h3.4l-.6 2.6h-2.2z" fill="rgba(255,255,255,0.30)"/></svg>
<div class="a" style="left:1px;top:733px;width:299px;height:1px;background:#343434;"></div>
<svg class="a" style="left:6px;top:742px;" width="15" height="14" viewBox="0 0 15 14"><path d="M0.8 7.2C2.5 -0.6 12.5 -0.6 14.2 7.2" fill="none" stroke="#d8d8d8" stroke-width="1.5"/><circle cx="7.5" cy="4.8" r="3.4" fill="#d8d8d8"/><path d="M1.3 9C4 13.5 11 13.5 13.7 9" fill="none" stroke="#d8d8d8" stroke-width="1.3"/></svg>
<div class="a" style="left:85px;top:734px;width:29px;height:29px;background:#6d3536;"></div>
<div class="a" style="left:115px;top:734px;width:14px;height:29px;background:#6d3536;"></div>
<div class="a" style="left:130px;top:734px;width:92px;height:29px;background:#6d3536;"></div>
<div class="a" style="left:223px;top:734px;width:18px;height:29px;background:#6d3536;"></div>
<div class="a" style="left:242px;top:734px;width:18px;height:29px;background:#6d3536;"></div>
<div class="a" style="left:261px;top:734px;width:18px;height:29px;background:#6d3536;"></div>
<div class="a" style="left:280px;top:734px;width:20px;height:29px;background:#6d3536;"></div>
<div class="a" style="left:39px;top:744px;width:1px;height:9px;background:#555;"></div>
<svg class="a" style="left:69px;top:744px;" width="9" height="9" viewBox="0 0 9 9"><path d="M0.5 0v8.5H9" fill="none" stroke="#555"/></svg>
<div class="a" style="left:87px;top:737px;width:25px;height:25px;border:1px solid #2a2a2a;background:repeating-conic-gradient(#a07070 0 25%,#b08080 0 50%) 0 0/8px 8px"></div>
<div class="a" style="left:95px;top:749px;width:9px;height:3px;border-radius:50%;background:#5070c0"></div>
<svg class="a" style="left:117px;top:736px;" width="12" height="11" viewBox="0 0 12 11"><path d="M1.5 0.5H10.5V6.5L7.5 9.5H2.5V5.5" fill="none" stroke="#a8a8a8" stroke-width="1"/><path d="M7.5 9.5V6.5H10.5" fill="none" stroke="#a8a8a8"/><path d="M0.3 1.5L6 7" stroke="#a8a8a8" stroke-width="1.3"/></svg>
<svg class="a" style="left:116px;top:752px;" width="13" height="9" viewBox="0 0 13 9"><rect x="0.75" y="0.75" width="11.5" height="7.5" fill="none" stroke="#a8a8a8" stroke-width="1.5"/><path d="M5 2.5v4l3-2z" fill="#a8a8a8"/></svg>
<div class="t" style="left:130px;top:744px;font-size:11px;line-height:11px;color:#c0a8a8;letter-spacing:0.35px">Shadow</div>
<svg class="a" style="left:245px;top:741px;" width="13" height="15" viewBox="0 0 13 15"><rect x="0" y="6" width="12" height="8" fill="rgba(255,255,255,0.30)"/><path d="M6.5 0.8A4 5 0 0 1 10.5 6" fill="none" stroke="rgba(255,255,255,0.30)" stroke-width="1.6"/></svg>
<svg class="a" style="left:262px;top:742px" width="15" height="12" viewBox="0 0 15 13"><path d="M9.8 5.5C9 2.2 7.3 1 5.6 1 2.8 1 1.1 4.5 1.1 7.6 1.1 10.2 2.6 11.6 4.6 11.3 7.4 10.9 10 5.5 12.8 1.2M9.6 6.2C9.9 9 11 11.2 13.3 11.4" fill="none" stroke="rgba(255,255,255,0.30)" stroke-width="2.1"/></svg>
<svg class="a" style="left:281px;top:741px;" width="15" height="15" viewBox="0 0 15 15"><rect x="0" y="0" width="5" height="5" fill="rgba(255,255,255,0.12)"/><rect x="5" y="0" width="5" height="5" fill="rgba(255,255,255,0.28)"/><rect x="10" y="0" width="5" height="5" fill="rgba(255,255,255,0.12)"/><rect x="0" y="5" width="5" height="5" fill="rgba(255,255,255,0.28)"/><rect x="5" y="5" width="5" height="5" fill="rgba(255,255,255,0.12)"/><rect x="10" y="5" width="5" height="5" fill="rgba(255,255,255,0.28)"/><rect x="0" y="10" width="5" height="5" fill="rgba(255,255,255,0.12)"/><rect x="5" y="10" width="5" height="5" fill="rgba(255,255,255,0.28)"/><rect x="10" y="10" width="5" height="5" fill="rgba(255,255,255,0.12)"/></svg>
<svg class="a" style="left:224px;top:741px;" width="16" height="16" viewBox="0 0 16 16"><path d="M6.3 11C4.6 9.3 4.3 8.2 4.3 6.8A3.7 3.7 0 0 1 11.7 6.8C11.7 8.2 11.4 9.3 9.7 11z" fill="rgba(255,255,255,0.30)"/><path d="M6.3 11.6h3.4l-.6 2.6h-2.2z" fill="rgba(255,255,255,0.30)"/></svg>
<div class="a" style="left:0px;top:757px;width:314px;height:35px;background:#484848;"></div>
<svg class="a" style="left:6px;top:762px;" width="22" height="20" viewBox="0 0 22 20"><path d="M10 1v18M1 10h18" stroke="#dcdcdc" stroke-width="2"/></svg>
<svg class="a" style="left:32px;top:768px;" width="9" height="6" viewBox="0 0 9 6"><path d="M0 0h8L4 5z" fill="#999"/></svg>
<svg class="a" style="left:48px;top:760px;" width="24" height="24" viewBox="0 0 24 24"><rect x="6.75" y="2.75" width="14.5" height="14.5" fill="none" stroke="#dcdcdc" stroke-width="1.5"/><path d="M2.75 6v15.25H18" fill="none" stroke="#dcdcdc" stroke-width="1.5"/></svg>
<svg class="a" style="left:81px;top:764px;" width="22" height="14" viewBox="0 0 22 14"><path d="M1 2L11 12 21 2" fill="none" stroke="#dcdcdc" stroke-width="2"/></svg>
<svg class="a" style="left:113px;top:764px;" width="22" height="14" viewBox="0 0 22 14"><path d="M1 12L11 2 21 12" fill="none" stroke="#dcdcdc" stroke-width="2"/></svg>
<svg class="a" style="left:145px;top:762px;" width="22" height="20" viewBox="0 0 22 20"><g fill="#dcdcdc"><rect x="1" y="3" width="20" height="2"/><rect x="1" y="9" width="20" height="2"/><rect x="1" y="15" width="20" height="2"/><ellipse cx="16" cy="4" rx="2" ry="2.2"/><ellipse cx="6" cy="10" rx="2" ry="2.2"/><ellipse cx="12" cy="16" rx="2" ry="2.2"/></g></svg>
<svg class="a" style="left:289px;top:761px;" width="20" height="22" viewBox="0 0 20 22"><rect x="0" y="4" width="19" height="2.5" fill="#d8d8d8"/><path d="M5 4V2.5a2 2 0 0 1 2-2h5a2 2 0 0 1 2 2V4" fill="none" stroke="#d8d8d8" stroke-width="1.3"/><path d="M2 8h15v12a1.5 1.5 0 0 1-1.5 1.5h-12A1.5 1.5 0 0 1 2 20z" fill="#d8d8d8"/></svg>
<div class="a" style="left:321px;top:115px;width:1084px;height:32px;background:#4b4b4b;border:1px solid #5a5a5a;border-bottom:none;border-radius:4px 4px 0 0;box-shadow:0 -1px 0 #3a3a3a"></div>
<div class="a" style="left:334px;top:123px;width:13px;height:13px;border-radius:50%;background:radial-gradient(circle at 45% 55%,rgba(120,160,255,.9) 0,rgba(120,160,255,0) 45%),conic-gradient(from 20deg,#ff3cf0,#ff8ac0 50deg,#ffe000 110deg,#9cff60 150deg,#00e8ff 220deg,#4a8cff 270deg,#c040ff 320deg,#ff3cf0)"></div>
<svg class="a" style="left:333px;top:123px;" width="14" height="14" viewBox="0 0 14 14"><path d="M0.50 0.80L1.60 0.20L10.50 8.80L9.20 10.50z" fill="#2a2a2a"/><circle cx="9.80" cy="9.60" r="1.30" fill="#1a1a1a"/></svg>
<div class="t" style="left:783px;top:126px;font-size:12px;line-height:12px;color:#d8d8d8;letter-spacing:-0.05px">japanese animation&nbsp; test.kra *</div>
<svg class="a" style="left:1376px;top:126px;" width="13" height="13" viewBox="0 0 13 13"><path d="M1 1L12 12M12 1L1 12" stroke="#dedede" stroke-width="1.6"/></svg>
<div class="a" style="left:321px;top:147px;width:1070px;height:627px;background:#808080;"></div>
<div class="a" style="left:389px;top:147px;width:878px;height:584px;background:#fff;"></div>
<div class="a" style="left:488px;top:147px;width:82px;height:34px;background:#000;"></div>
<div class="a" style="left:506px;top:157px;width:46px;height:10px;background:#fff;border-radius:5px;box-shadow:0 0 1px 1px #555"></div>
<div class="a" style="left:809px;top:147px;width:40px;height:34px;background:#000;"></div>
<svg class="a" style="left:818px;top:152px;" width="20" height="20" viewBox="0 0 20 20"><circle cx="10" cy="10" r="9" fill="#fff"/><path d="M10 5.5v9M5.5 10h9" stroke="#000" stroke-width="1.6"/></svg>
<div class="a" style="left:1085px;top:147px;width:82px;height:34px;background:#000;"></div>
<div class="a" style="left:1103px;top:157px;width:46px;height:10px;background:#fff;border-radius:5px;box-shadow:0 0 1px 1px #555"></div>
<svg class="a" style="left:417px;top:239px;" width="822" height="462" viewBox="0 0 822 462"><rect x="0.5" y="0.5" width="821" height="461" fill="none" stroke="#666" stroke-width="1" stroke-dasharray="2 2"/></svg>
<svg class="a" style="left:491px;top:281px;" width="673" height="378" viewBox="0 0 673 378"><rect x="0.5" y="0.5" width="672" height="377" fill="none" stroke="#666" stroke-width="1" stroke-dasharray="2 2"/></svg>
<svg class="a" style="left:453px;top:259px;" width="750" height="422" viewBox="0 0 750 422"><rect x="1.5" y="1.5" width="747" height="419" fill="none" stroke="#5e5656" stroke-width="1.6"/></svg>
<svg class="a" style="left:826px;top:261px;" width="3" height="15" viewBox="0 0 3 15"><path d="M1.5 0v15" stroke="#666" stroke-dasharray="2 2"/></svg>
<svg class="a" style="left:826px;top:663px;" width="3" height="16" viewBox="0 0 3 16"><path d="M1.5 0v16" stroke="#666" stroke-dasharray="2 2"/></svg>
<svg class="a" style="left:455px;top:468px;" width="16" height="3" viewBox="0 0 16 3"><path d="M0 1.5h16" stroke="#666" stroke-dasharray="2 2"/></svg>
<svg class="a" style="left:1185px;top:468px;" width="16" height="3" viewBox="0 0 16 3"><path d="M0 1.5h16" stroke="#666" stroke-dasharray="2 2"/></svg>
<svg class="a" style="left:819px;top:461px;" width="17" height="17" viewBox="0 0 17 17"><path d="M8.5 1v15M1 8.5h15" stroke="#888" stroke-width="1" stroke-dasharray="2 1"/></svg>
<svg class="a" style="left:630px;top:300px;" width="180" height="200" viewBox="0 0 180 200">
<ellipse cx="86" cy="157" rx="76" ry="30" fill="none" stroke="#f2f5fb" stroke-width="2"/>
<defs><clipPath id="eg"><ellipse cx="94" cy="86.7" rx="66" ry="72.7"/></clipPath></defs>
<ellipse cx="94" cy="86.7" rx="66" ry="72.7" fill="#f87800"/>
<g clip-path="url(#eg)">
<ellipse cx="103.4" cy="43.8" rx="31" ry="24" fill="#f80000"/>
<path d="M37 121.5Q90 103 149 128L175 145V200H5V138z" fill="#0066ff"/>
</g>
<ellipse cx="94" cy="86.7" rx="66" ry="72.7" fill="none" stroke="#111" stroke-width="2.6"/>
</svg>
<div class="a" style="left:659px;top:616px;width:127px;height:38px;border-radius:50%;background:#0060e0"></div>
<div class="a" style="left:1391px;top:147px;width:14px;height:627px;background:#3d3d3d;"></div>
<div class="a" style="left:1392px;top:147px;width:13px;height:13px;border:1px solid #555;background:#404040"></div>
<svg class="a" style="left:1394px;top:151px;" width="9" height="6" viewBox="0 0 9 6"><path d="M0 5h8L4 0z" fill="#999"/></svg>
<div class="a" style="left:1392px;top:367px;width:13px;height:214px;border:1px solid #555;background:#454545"></div>
<div class="a" style="left:1392px;top:761px;width:13px;height:13px;border:1px solid #555;background:#404040"></div>
<svg class="a" style="left:1394px;top:765px;" width="9" height="6" viewBox="0 0 9 6"><path d="M0 0h8L4 5z" fill="#999"/></svg>
<div class="a" style="left:321px;top:774px;width:1071px;height:14px;background:#3d3d3d;"></div>
<div class="a" style="left:321px;top:775px;width:13px;height:13px;border:1px solid #555;background:#404040"></div>
<svg class="a" style="left:325px;top:777px;" width="6" height="9" viewBox="0 0 6 9"><path d="M5 0v8L0 4z" fill="#999"/></svg>
<div class="a" style="left:668px;top:775px;width:397px;height:13px;border:1px solid #555;background:#454545"></div>
<div class="a" style="left:1378px;top:775px;width:13px;height:13px;border:1px solid #555;background:#404040"></div>
<svg class="a" style="left:1382px;top:777px;" width="6" height="9" viewBox="0 0 6 9"><path d="M0 0v8l5-4z" fill="#999"/></svg>
<svg class="a" style="left:1407px;top:445px;" width="3" height="18" viewBox="0 0 3 18"><rect x="0" y="0" width="2" height="2" fill="#777"/><rect x="0" y="3" width="2" height="2" fill="#777"/><rect x="0" y="6" width="2" height="2" fill="#777"/><rect x="0" y="9" width="2" height="2" fill="#777"/><rect x="0" y="12" width="2" height="2" fill="#777"/><rect x="0" y="15" width="2" height="2" fill="#777"/></svg>
<svg class="a" style="left:832px;top:789px;" width="18" height="3" viewBox="0 0 18 3"><rect x="0" y="0" width="2" height="2" fill="#777"/><rect x="3" y="0" width="2" height="2" fill="#777"/><rect x="6" y="0" width="2" height="2" fill="#777"/><rect x="9" y="0" width="2" height="2" fill="#777"/><rect x="12" y="0" width="2" height="2" fill="#777"/><rect x="15" y="0" width="2" height="2" fill="#777"/></svg>
<svg class="a" style="left:318px;top:445px;" width="3" height="18" viewBox="0 0 3 18"><rect x="0" y="0" width="2" height="2" fill="#666"/><rect x="0" y="3" width="2" height="2" fill="#666"/><rect x="0" y="6" width="2" height="2" fill="#666"/><rect x="0" y="9" width="2" height="2" fill="#666"/><rect x="0" y="12" width="2" height="2" fill="#666"/><rect x="0" y="15" width="2" height="2" fill="#666"/></svg>
<div class="a" style="left:1405px;top:115px;width:275px;height:680px;background:#484848;"></div>
<div class="a" style="left:1537px;top:139px;width:143px;height:1px;background:#3a3a3a;"></div>
<div class="a" style="left:1537px;top:118px;width:142px;height:21px;background:#444;border:1px solid #555;border-bottom:none;border-radius:4px 4px 0 0;box-shadow:0 -1px 0 #3a3a3a"></div>
<div class="t" style="left:1547px;top:123px;font-size:12px;line-height:12px;color:#d2d2d2;letter-spacing:-0.1px">Valores predefinidos ...</div>
<div class="a" style="left:1412px;top:115px;width:122px;height:26px;background:#4b4b4b;border:1px solid #5a5a5a;border-bottom:none;border-radius:4px 4px 0 0;box-shadow:0 -1px 0 #3a3a3a"></div>
<div class="t" style="left:1424px;top:122px;font-size:12px;line-height:12px;color:#d8d8d8;letter-spacing:-0.15px">Selector de color ...</div>
<svg class="a" style="left:1412px;top:140px;" width="17" height="17" viewBox="0 0 17 17"><circle cx="8.5" cy="8.5" r="7.7" fill="none" stroke="#d0d0d0" stroke-width="1.1"/><rect x="4.5" y="8.5" width="8" height="4.5" fill="#d0d0d0"/><path d="M6 8.5V6.5a2.6 2.6 0 0 1 5.2 0" fill="none" stroke="#d0d0d0" stroke-width="1.2"/></svg>
<div class="t" style="left:1435px;top:142px;font-size:12px;line-height:12px;color:#d8d8d8;letter-spacing:-0.2px">Selector de color pequeño</div>
<svg class="a" style="left:1640px;top:140px;" width="16" height="16" viewBox="0 0 16 16"><rect x="6.75" y="1.75" width="8" height="8" fill="none" stroke="#dedede" stroke-width="1.3"/><rect x="6.5" y="1" width="8.5" height="1.6" fill="#dedede"/><rect x="1.75" y="6.75" width="8" height="8" fill="#484848" stroke="#dedede" stroke-width="1.3"/><rect x="1.5" y="6" width="8.5" height="1.6" fill="#dedede"/></svg>
<svg class="a" style="left:1662px;top:142px;" width="12" height="12" viewBox="0 0 12 12"><path d="M1 1L11 11M11 1L1 11" stroke="#d0d0d0" stroke-width="1.4"/></svg>
<div class="a" style="left:1421px;top:166px;width:249px;height:32px;background:linear-gradient(to right,#f00,#ff0 16.67%,#0f0 33.33%,#0ff 50%,#00f 66.67%,#f0f 83.33%,#f00);"></div>
<div class="a" style="left:1421px;top:166px;width:1px;height:32px;background:#ffb0b0;"></div>
<div class="a" style="left:1421px;top:204px;width:249px;height:574px;background:linear-gradient(to bottom,rgba(0,0,0,0),#000),linear-gradient(to right,#fff,#f00);"></div>
<svg class="a" style="left:1660px;top:212px;" width="10" height="14" viewBox="0 0 10 14"><path d="M10 1.5A5 5.5 0 0 0 10 12.5" fill="none" stroke="#222" stroke-width="1.2"/><path d="M10 3A3.5 4 0 0 0 10 11" fill="none" stroke="#fff" stroke-width="1"/></svg>
<svg class="a" style="left:1408px;top:445px;" width="3" height="18" viewBox="0 0 3 18"><rect x="0" y="0" width="2" height="2" fill="#6e6e6e"/><rect x="0" y="3" width="2" height="2" fill="#6e6e6e"/><rect x="0" y="6" width="2" height="2" fill="#6e6e6e"/><rect x="0" y="9" width="2" height="2" fill="#6e6e6e"/><rect x="0" y="12" width="2" height="2" fill="#6e6e6e"/><rect x="0" y="15" width="2" height="2" fill="#6e6e6e"/></svg>
<div class="a" style="left:0px;top:792px;width:1680px;height:34px;background:#484848;"></div>
<div class="t" style="left:9px;top:805px;font-size:12px;line-height:12px;color:#d4d4d4;letter-spacing:-0.25px">Línea de tiempo de la animación</div>
<svg class="a" style="left:216px;top:801px;" width="17" height="18" viewBox="0 0 17 18"><rect x="1" y="3" width="2.5" height="12" fill="#d6d6d6"/><path d="M13 1L4 9l9 8z" fill="#d6d6d6"/><rect x="13.5" y="1" width="2.5" height="16" fill="#d6d6d6"/></svg>
<svg class="a" style="left:252px;top:801px;" width="14" height="18" viewBox="0 0 14 18"><path d="M10 1L1 9l9 8z" fill="#d6d6d6"/><rect x="11" y="1" width="2.5" height="16" fill="#d6d6d6"/></svg>
<div class="a" style="left:286px;top:804px;width:12px;height:12px;background:#d6d6d6;"></div>
<svg class="a" style="left:321px;top:801px;" width="11" height="18" viewBox="0 0 11 18"><path d="M1 1l9 8-9 8z" fill="#d6d6d6"/></svg>
<svg class="a" style="left:354px;top:801px;" width="14" height="18" viewBox="0 0 14 18"><rect x="1" y="1" width="2.5" height="16" fill="#d6d6d6"/><path d="M4 1l9 8-9 8z" fill="#d6d6d6"/></svg>
<svg class="a" style="left:386px;top:801px;" width="17" height="18" viewBox="0 0 17 18"><rect x="1" y="1" width="2.5" height="16" fill="#d6d6d6"/><path d="M4 1l9 8-9 8z" fill="#d6d6d6"/><rect x="13" y="3" width="2.5" height="12" fill="#d6d6d6"/></svg>
<div class="a" style="left:427px;top:799px;width:68px;height:21px;border-radius:3px;border:1px solid #353535;background:#3b3b3b"></div>
<div class="a" style="left:481px;top:800px;width:13px;height:19px;background:#404040;border-left:1px solid #333"></div>
<svg class="a" style="left:483px;top:802px;" width="9" height="15" viewBox="0 0 9 15"><path d="M1 5h7L4.5 1z" fill="#777"/><path d="M1 10h7L4.5 14z" fill="#777"/></svg>
<div class="t" style="left:457px;top:804px;font-size:11px;line-height:11px;color:#d0d0d0;">#</div>
<div class="t" style="left:470px;top:804px;font-size:12px;line-height:12px;color:#d8d8d8;">0</div>
<div class="a" style="left:511px;top:795px;width:30px;height:29px;border-radius:4px;border:1px solid #333;background:#454545"></div>
<svg class="a" style="left:516px;top:800px;" width="20" height="19" viewBox="0 0 20 19"><rect x="1" y="4" width="17" height="11" fill="none" stroke="#d8d8d8" stroke-width="1.3"/><path d="M2 5v9M17 5v9" stroke="#d8d8d8" stroke-width="2" stroke-dasharray="1 1"/><path d="M8 6.5v6l4.5-3z" fill="#d8d8d8"/><path d="M13 4l2-3M5 15l-2 3" stroke="#d8d8d8" stroke-width="1.3"/></svg>
<div class="a" style="left:541px;top:799px;width:117px;height:21px;border-radius:3px;border:1px solid #353535;background:#383838"></div>
<div class="a" style="left:542px;top:800px;width:43px;height:19px;background:#52708e;"></div>
<div class="a" style="left:644px;top:800px;width:13px;height:19px;background:#404040;border-left:1px solid #333"></div>
<svg class="a" style="left:646px;top:802px;" width="9" height="15" viewBox="0 0 9 15"><path d="M1 5h7L4.5 1z" fill="#999"/><path d="M1 10h7L4.5 14z" fill="#999"/></svg>
<div class="t" style="left:549px;top:804px;font-size:12px;line-height:12px;color:#dedede;letter-spacing:-0.45px">Velocidad: 100 %</div>
<svg class="a" style="left:678px;top:800px;" width="21" height="17" viewBox="0 0 21 17"><rect x="1" y="2" width="18" height="13" fill="none" stroke="#d6d6d6" stroke-width="1.5"/><path d="M2.5 3v11M17.5 3v11" stroke="#d6d6d6" stroke-width="2" stroke-dasharray="1 1"/></svg>
<svg class="a" style="left:707px;top:799px;" width="24" height="18" viewBox="0 0 24 18"><rect x="1" y="6" width="16" height="10" fill="none" stroke="#d6d6d6" stroke-width="1.4"/><path d="M6 6V1.5h16v10h-5" fill="none" stroke="#d6d6d6" stroke-width="1.4"/><path d="M2.5 7v8" stroke="#d6d6d6" stroke-width="2" stroke-dasharray="1 1"/></svg>
<svg class="a" style="left:739px;top:799px;" width="21" height="19" viewBox="0 0 21 19"><rect x="1" y="3" width="18" height="13" fill="none" stroke="#d6d6d6" stroke-width="1.5"/><path d="M2.5 4v11M17.5 4v11" stroke="#d6d6d6" stroke-width="2" stroke-dasharray="1 1"/><path d="M5 18L15 1" stroke="#d6d6d6" stroke-width="1.5"/></svg>
<svg class="a" style="left:1526px;top:800px;" width="21" height="21" viewBox="0 0 21 21"><path d="M10.5 0.5C13 5 20 9 20 14.5 20 18.5 17 20.5 13 20.5H8C4 20.5 1 18.5 1 14.5 1 9 8 5 10.5 0.5z" fill="#d4d4d4"/><path d="M10.3 1C7.5 6 4.5 12 6.5 20.5" stroke="#484848" stroke-width="1.4" fill="none"/><path d="M10.7 1C11.5 7 10.5 14 13.5 20.5" stroke="#484848" stroke-width="1.4" fill="none"/></svg>
<svg class="a" style="left:1558px;top:800px;" width="24" height="21" viewBox="0 0 24 21"><rect x="1" y="1" width="18" height="3" fill="#d8d8d8"/><rect x="1" y="7" width="18" height="3" fill="#d8d8d8"/><rect x="1" y="13" width="18" height="3" fill="#d8d8d8"/><path d="M17 17h6l-3 3z" fill="#999"/></svg>
<svg class="a" style="left:1621px;top:802px;" width="16" height="16" viewBox="0 0 16 16"><rect x="6.75" y="1.75" width="8" height="8" fill="none" stroke="#dedede" stroke-width="1.3"/><rect x="6.5" y="1" width="8.5" height="1.6" fill="#dedede"/><rect x="1.75" y="6.75" width="8" height="8" fill="#484848" stroke="#dedede" stroke-width="1.3"/><rect x="1.5" y="6" width="8.5" height="1.6" fill="#dedede"/></svg>
<svg class="a" style="left:1651px;top:804px;" width="12" height="12" viewBox="0 0 12 12"><path d="M1 1L11 11M11 1L1 11" stroke="#d0d0d0" stroke-width="1.4"/></svg>
<div class="a" style="left:202px;top:826px;width:1478px;height:20px;background:#363636;"></div>
<div class="a" style="left:0px;top:826px;width:202px;height:20px;background:#383838;"></div>
<div class="a" style="left:1px;top:827px;width:201px;height:1px;background:#555;"></div>
<svg class="a" style="left:6px;top:832px;" width="12" height="12" viewBox="0 0 12 12"><path d="M5.5 0v11M0 5.5h11" stroke="#d8d8d8" stroke-width="1.6"/><path d="M8 9h4l-2 2z" fill="#999"/></svg>
<svg class="a" style="left:24px;top:832px;" width="14" height="12" viewBox="0 0 14 12"><path d="M1 4h3l4-4v11L4 7H1z" fill="#d0d0d0"/><path d="M9 9h4l-2 2z" fill="#999"/></svg>
<svg class="a" style="left:185px;top:831px;" width="13" height="13" viewBox="0 0 13 13"><rect x="0.75" y="0.75" width="11.5" height="11.5" rx="1.5" fill="none" stroke="#c8c8c8" stroke-width="1.5" stroke-dasharray="2.5 1"/><path d="M2.5 6.5h8M2.5 6.5l2.5-2.5M2.5 6.5l2.5 2.5M10.5 6.5L8 4M10.5 6.5L8 9" stroke="#e0e0e0" stroke-width="1.4" fill="none"/></svg>
<div class="a" style="left:202px;top:840px;width:1478px;height:1px;background:#3b3b3b;"></div>
<div class="t" style="left:204px;top:828px;font-size:12px;line-height:12px;color:#d4d4d4;letter-spacing:-0.3px">0</div>
<div class="a" style="left:232px;top:841px;width:1px;height:5px;background:#3e3e3e;"></div>
<div class="a" style="left:263px;top:841px;width:1px;height:5px;background:#3e3e3e;"></div>
<div class="a" style="left:294px;top:841px;width:1px;height:5px;background:#3e3e3e;"></div>
<div class="a" style="left:294px;top:827px;width:1px;height:14px;background:#3e3e3e;"></div>
<div class="t" style="left:297px;top:828px;font-size:12px;line-height:12px;color:#d4d4d4;letter-spacing:-0.3px">3</div>
<div class="a" style="left:325px;top:841px;width:1px;height:5px;background:#3e3e3e;"></div>
<div class="a" style="left:356px;top:841px;width:1px;height:5px;background:#3e3e3e;"></div>
<div class="a" style="left:387px;top:841px;width:1px;height:5px;background:#3e3e3e;"></div>
<div class="a" style="left:387px;top:827px;width:1px;height:14px;background:#3e3e3e;"></div>
<div class="t" style="left:390px;top:828px;font-size:12px;line-height:12px;color:#d4d4d4;letter-spacing:-0.3px">6</div>
<div class="a" style="left:418px;top:841px;width:1px;height:5px;background:#3e3e3e;"></div>
<div class="a" style="left:449px;top:841px;width:1px;height:5px;background:#3e3e3e;"></div>
<div class="a" style="left:480px;top:841px;width:1px;height:5px;background:#3e3e3e;"></div>
<div class="a" style="left:480px;top:827px;width:1px;height:14px;background:#3e3e3e;"></div>
<div class="t" style="left:483px;top:828px;font-size:12px;line-height:12px;color:#d4d4d4;letter-spacing:-0.3px">9</div>
<div class="a" style="left:511px;top:841px;width:1px;height:5px;background:#3e3e3e;"></div>
<div class="a" style="left:542px;top:841px;width:1px;height:5px;background:#3e3e3e;"></div>
<div class="a" style="left:573px;top:841px;width:1px;height:5px;background:#3e3e3e;"></div>
<div class="a" style="left:573px;top:827px;width:1px;height:14px;background:#3e3e3e;"></div>
<div class="t" style="left:576px;top:828px;font-size:12px;line-height:12px;color:#d4d4d4;letter-spacing:-0.3px">12</div>
<div class="a" style="left:604px;top:841px;width:1px;height:5px;background:#3e3e3e;"></div>
<div class="a" style="left:635px;top:841px;width:1px;height:5px;background:#3e3e3e;"></div>
<div class="a" style="left:666px;top:841px;width:1px;height:5px;background:#3e3e3e;"></div>
<div class="a" style="left:666px;top:827px;width:1px;height:14px;background:#3e3e3e;"></div>
<div class="t" style="left:669px;top:828px;font-size:12px;line-height:12px;color:#d4d4d4;letter-spacing:-0.3px">15</div>
<div class="a" style="left:697px;top:841px;width:1px;height:5px;background:#3e3e3e;"></div>
<div class="a" style="left:728px;top:841px;width:1px;height:5px;background:#3e3e3e;"></div>
<div class="a" style="left:759px;top:841px;width:1px;height:5px;background:#3e3e3e;"></div>
<div class="a" style="left:759px;top:827px;width:1px;height:14px;background:#3e3e3e;"></div>
<div class="t" style="left:762px;top:828px;font-size:12px;line-height:12px;color:#d4d4d4;letter-spacing:-0.3px">18</div>
<div class="a" style="left:790px;top:841px;width:1px;height:5px;background:#3e3e3e;"></div>
<div class="a" style="left:821px;top:841px;width:1px;height:5px;background:#3e3e3e;"></div>
<div class="a" style="left:852px;top:841px;width:1px;height:5px;background:#3e3e3e;"></div>
<div class="a" style="left:852px;top:827px;width:1px;height:14px;background:#3e3e3e;"></div>
<div class="t" style="left:855px;top:828px;font-size:12px;line-height:12px;color:#d4d4d4;letter-spacing:-0.3px">21</div>
<div class="a" style="left:883px;top:841px;width:1px;height:5px;background:#3e3e3e;"></div>
<div class="a" style="left:914px;top:841px;width:1px;height:5px;background:#3e3e3e;"></div>
<div class="a" style="left:945px;top:841px;width:1px;height:5px;background:#3e3e3e;"></div>
<div class="a" style="left:945px;top:827px;width:1px;height:14px;background:#3e3e3e;"></div>
<div class="t" style="left:948px;top:828px;font-size:12px;line-height:12px;color:#d4d4d4;letter-spacing:-0.3px">24</div>
<div class="a" style="left:976px;top:841px;width:1px;height:5px;background:#3e3e3e;"></div>
<div class="a" style="left:1007px;top:841px;width:1px;height:5px;background:#3e3e3e;"></div>
<div class="a" style="left:1038px;top:841px;width:1px;height:5px;background:#3e3e3e;"></div>
<div class="a" style="left:1038px;top:827px;width:1px;height:14px;background:#3e3e3e;"></div>
<div class="t" style="left:1041px;top:828px;font-size:12px;line-height:12px;color:#d4d4d4;letter-spacing:-0.3px">27</div>
<div class="a" style="left:1069px;top:841px;width:1px;height:5px;background:#3e3e3e;"></div>
<div class="a" style="left:1100px;top:841px;width:1px;height:5px;background:#3e3e3e;"></div>
<div class="a" style="left:1131px;top:841px;width:1px;height:5px;background:#3e3e3e;"></div>
<div class="a" style="left:1131px;top:827px;width:1px;height:14px;background:#3e3e3e;"></div>
<div class="t" style="left:1134px;top:828px;font-size:12px;line-height:12px;color:#d4d4d4;letter-spacing:-0.3px">30</div>
<div class="a" style="left:1162px;top:841px;width:1px;height:5px;background:#3e3e3e;"></div>
<div class="a" style="left:1193px;top:841px;width:1px;height:5px;background:#3e3e3e;"></div>
<div class="a" style="left:1224px;top:841px;width:1px;height:5px;background:#3e3e3e;"></div>
<div class="a" style="left:1224px;top:827px;width:1px;height:14px;background:#3e3e3e;"></div>
<div class="t" style="left:1227px;top:828px;font-size:12px;line-height:12px;color:#d4d4d4;letter-spacing:-0.3px">33</div>
<div class="a" style="left:1255px;top:841px;width:1px;height:5px;background:#3e3e3e;"></div>
<div class="a" style="left:1286px;top:841px;width:1px;height:5px;background:#3e3e3e;"></div>
<div class="a" style="left:1317px;top:841px;width:1px;height:5px;background:#3e3e3e;"></div>
<div class="a" style="left:1317px;top:827px;width:1px;height:14px;background:#3e3e3e;"></div>
<div class="t" style="left:1320px;top:828px;font-size:12px;line-height:12px;color:#d4d4d4;letter-spacing:-0.3px">36</div>
<div class="a" style="left:1348px;top:841px;width:1px;height:5px;background:#3e3e3e;"></div>
<div class="a" style="left:1379px;top:841px;width:1px;height:5px;background:#3e3e3e;"></div>
<div class="a" style="left:1410px;top:841px;width:1px;height:5px;background:#3e3e3e;"></div>
<div class="a" style="left:1410px;top:827px;width:1px;height:14px;background:#3e3e3e;"></div>
<div class="t" style="left:1413px;top:828px;font-size:12px;line-height:12px;color:#d4d4d4;letter-spacing:-0.3px">39</div>
<div class="a" style="left:1441px;top:841px;width:1px;height:5px;background:#3e3e3e;"></div>
<div class="a" style="left:1472px;top:841px;width:1px;height:5px;background:#3e3e3e;"></div>
<div class="a" style="left:1503px;top:841px;width:1px;height:5px;background:#3e3e3e;"></div>
<div class="a" style="left:1503px;top:827px;width:1px;height:14px;background:#3e3e3e;"></div>
<div class="t" style="left:1506px;top:828px;font-size:12px;line-height:12px;color:#d4d4d4;letter-spacing:-0.3px">42</div>
<div class="a" style="left:1534px;top:841px;width:1px;height:5px;background:#3e3e3e;"></div>
<div class="a" style="left:1565px;top:841px;width:1px;height:5px;background:#3e3e3e;"></div>
<div class="a" style="left:1596px;top:841px;width:1px;height:5px;background:#3e3e3e;"></div>
<div class="a" style="left:1596px;top:827px;width:1px;height:14px;background:#3e3e3e;"></div>
<div class="t" style="left:1599px;top:828px;font-size:12px;line-height:12px;color:#d4d4d4;letter-spacing:-0.3px">45</div>
<div class="a" style="left:1627px;top:841px;width:1px;height:5px;background:#3e3e3e;"></div>
<div class="a" style="left:1658px;top:841px;width:1px;height:5px;background:#3e3e3e;"></div>
<div class="a" style="left:202px;top:841px;width:30px;height:4px;background:#e39a30;"></div>
<div class="a" style="left:202px;top:846px;width:1478px;height:23px;background:#33383c;"></div>
<div class="a" style="left:202px;top:869px;width:1478px;height:1px;background:#3a3a3a;"></div>
<div class="a" style="left:202px;top:870px;width:1478px;height:23px;background:#373737;"></div>
<div class="a" style="left:202px;top:881px;width:1478px;height:1px;background:#46586a;"></div>
<div class="a" style="left:202px;top:893px;width:1478px;height:83px;background:#383838;"></div>
<div class="a" style="left:232px;top:846px;width:1px;height:47px;background:#3c3c3c;"></div>
<div class="a" style="left:263px;top:846px;width:1px;height:47px;background:#3c3c3c;"></div>
<div class="a" style="left:294px;top:846px;width:1px;height:47px;background:#3c3c3c;"></div>
<div class="a" style="left:325px;top:846px;width:1px;height:47px;background:#3c3c3c;"></div>
<div class="a" style="left:356px;top:846px;width:1px;height:47px;background:#3c3c3c;"></div>
<div class="a" style="left:387px;top:846px;width:1px;height:47px;background:#3c3c3c;"></div>
<div class="a" style="left:418px;top:846px;width:1px;height:47px;background:#3c3c3c;"></div>
<div class="a" style="left:449px;top:846px;width:1px;height:47px;background:#3c3c3c;"></div>
<div class="a" style="left:480px;top:846px;width:1px;height:47px;background:#3c3c3c;"></div>
<div class="a" style="left:511px;top:846px;width:1px;height:47px;background:#3c3c3c;"></div>
<div class="a" style="left:542px;top:846px;width:1px;height:47px;background:#3c3c3c;"></div>
<div class="a" style="left:573px;top:846px;width:1px;height:47px;background:#3c3c3c;"></div>
<div class="a" style="left:604px;top:846px;width:1px;height:47px;background:#3c3c3c;"></div>
<div class="a" style="left:635px;top:846px;width:1px;height:47px;background:#3c3c3c;"></div>
<div class="a" style="left:666px;top:846px;width:1px;height:47px;background:#3c3c3c;"></div>
<div class="a" style="left:697px;top:846px;width:1px;height:47px;background:#3c3c3c;"></div>
<div class="a" style="left:728px;top:846px;width:1px;height:47px;background:#3c3c3c;"></div>
<div class="a" style="left:759px;top:846px;width:1px;height:47px;background:#3c3c3c;"></div>
<div class="a" style="left:790px;top:846px;width:1px;height:47px;background:#3c3c3c;"></div>
<div class="a" style="left:821px;top:846px;width:1px;height:47px;background:#3c3c3c;"></div>
<div class="a" style="left:852px;top:846px;width:1px;height:47px;background:#3c3c3c;"></div>
<div class="a" style="left:883px;top:846px;width:1px;height:47px;background:#3c3c3c;"></div>
<div class="a" style="left:914px;top:846px;width:1px;height:47px;background:#3c3c3c;"></div>
<div class="a" style="left:945px;top:846px;width:1px;height:47px;background:#3c3c3c;"></div>
<div class="a" style="left:976px;top:846px;width:1px;height:47px;background:#3c3c3c;"></div>
<div class="a" style="left:1007px;top:846px;width:1px;height:47px;background:#3c3c3c;"></div>
<div class="a" style="left:1038px;top:846px;width:1px;height:47px;background:#3c3c3c;"></div>
<div class="a" style="left:1069px;top:846px;width:1px;height:47px;background:#3c3c3c;"></div>
<div class="a" style="left:1100px;top:846px;width:1px;height:47px;background:#3c3c3c;"></div>
<div class="a" style="left:1131px;top:846px;width:1px;height:47px;background:#3c3c3c;"></div>
<div class="a" style="left:1162px;top:846px;width:1px;height:47px;background:#3c3c3c;"></div>
<div class="a" style="left:1193px;top:846px;width:1px;height:47px;background:#3c3c3c;"></div>
<div class="a" style="left:1224px;top:846px;width:1px;height:47px;background:#3c3c3c;"></div>
<div class="a" style="left:1255px;top:846px;width:1px;height:47px;background:#3c3c3c;"></div>
<div class="a" style="left:1286px;top:846px;width:1px;height:47px;background:#3c3c3c;"></div>
<div class="a" style="left:1317px;top:846px;width:1px;height:47px;background:#3c3c3c;"></div>
<div class="a" style="left:1348px;top:846px;width:1px;height:47px;background:#3c3c3c;"></div>
<div class="a" style="left:1379px;top:846px;width:1px;height:47px;background:#3c3c3c;"></div>
<div class="a" style="left:1410px;top:846px;width:1px;height:47px;background:#3c3c3c;"></div>
<div class="a" style="left:1441px;top:846px;width:1px;height:47px;background:#3c3c3c;"></div>
<div class="a" style="left:1472px;top:846px;width:1px;height:47px;background:#3c3c3c;"></div>
<div class="a" style="left:1503px;top:846px;width:1px;height:47px;background:#3c3c3c;"></div>
<div class="a" style="left:1534px;top:846px;width:1px;height:47px;background:#3c3c3c;"></div>
<div class="a" style="left:1565px;top:846px;width:1px;height:47px;background:#3c3c3c;"></div>
<div class="a" style="left:1596px;top:846px;width:1px;height:47px;background:#3c3c3c;"></div>
<div class="a" style="left:1627px;top:846px;width:1px;height:47px;background:#3c3c3c;"></div>
<div class="a" style="left:1658px;top:846px;width:1px;height:47px;background:#3c3c3c;"></div>
<div class="a" style="left:233px;top:846px;width:124px;height:23px;background:#394047;"></div>
<div class="a" style="left:232px;top:846px;width:1px;height:23px;background:#363c42;"></div>
<div class="a" style="left:263px;top:846px;width:1px;height:23px;background:#363c42;"></div>
<div class="a" style="left:294px;top:846px;width:1px;height:23px;background:#363c42;"></div>
<div class="a" style="left:325px;top:846px;width:1px;height:23px;background:#363c42;"></div>
<div class="a" style="left:356px;top:846px;width:1px;height:23px;background:#363c42;"></div>
<div class="a" style="left:202px;top:870px;width:30px;height:23px;background:#52708e;"></div>
<div class="a" style="left:233px;top:870px;width:30px;height:23px;background:#52708e;"></div>
<div class="a" style="left:264px;top:870px;width:30px;height:23px;background:#52708e;"></div>
<div class="a" style="left:295px;top:870px;width:30px;height:23px;background:#52708e;"></div>
<div class="a" style="left:326px;top:870px;width:30px;height:23px;background:#52708e;"></div>
<div class="a" style="left:202px;top:846px;width:30px;height:23px;background:#8a6a3e;"></div>
<div class="a" style="left:214px;top:855px;width:5px;height:5px;border-radius:50%;background:#e39a30"></div>
<div class="a" style="left:202px;top:846px;width:4px;height:23px;background:#e39a30;"></div>
<div class="a" style="left:228px;top:846px;width:4px;height:23px;background:#e39a30;"></div>
<div class="a" style="left:202px;top:870px;width:4px;height:23px;background:#e39a30;"></div>
<div class="a" style="left:228px;top:870px;width:4px;height:23px;background:#e39a30;"></div>
<div class="a" style="left:0px;top:846px;width:202px;height:48px;background:#383838;"></div>
<div class="a" style="left:1px;top:847px;width:201px;height:1px;background:#52708e;"></div>
<div class="a" style="left:1px;top:868px;width:201px;height:1px;background:#52708e;"></div>
<div class="a" style="left:1px;top:848px;width:201px;height:20px;background:#333;"></div>
<div class="a" style="left:1px;top:870px;width:201px;height:24px;background:#3a3a3a;"></div>
<svg class="a" style="left:6px;top:852px;" width="12" height="12" viewBox="0 0 12 12"><path d="M7 0l5 5-2 .5-3 3 .5 2.5-1 1L1.5 7.5l1-1 2.5.5 3-3z" fill="#777"/><path d="M4 8L0.5 11.5" stroke="#777" stroke-width="1.2"/></svg>
<div class="t" style="left:21px;top:852px;font-size:12px;line-height:12px;color:#dcdcdc;">Coloring</div>
<svg class="a" style="left:6px;top:877px;" width="12" height="12" viewBox="0 0 12 12"><path d="M7 0l5 5-2 .5-3 3 .5 2.5-1 1L1.5 7.5l1-1 2.5.5 3-3z" fill="#d0d0d0"/><path d="M4 8L0.5 11.5" stroke="#d0d0d0" stroke-width="1.2"/></svg>
<div class="t" style="left:21px;top:877px;font-size:12px;line-height:12px;color:#dcdcdc;letter-spacing:-0.2px">Capa de pintu...</div>
<svg class="a" style="left:131px;top:852px;" width="15" height="14" viewBox="0 0 15 14"><path d="M0.8 7.2C2.5 -0.6 12.5 -0.6 14.2 7.2" fill="none" stroke="#d8d8d8" stroke-width="1.5"/><circle cx="7.5" cy="4.8" r="3.4" fill="#d8d8d8"/><path d="M1.3 9C4 13.5 11 13.5 13.7 9" fill="none" stroke="#d8d8d8" stroke-width="1.3"/></svg>
<svg class="a" style="left:151px;top:851px;" width="13" height="15" viewBox="0 0 13 15"><rect x="0" y="6" width="12" height="8" fill="rgba(255,255,255,0.30)"/><path d="M6.5 0.8A4 5 0 0 1 10.5 6" fill="none" stroke="rgba(255,255,255,0.30)" stroke-width="1.6"/></svg>
<svg class="a" style="left:167px;top:852px" width="15" height="12" viewBox="0 0 15 13"><path d="M9.8 5.5C9 2.2 7.3 1 5.6 1 2.8 1 1.1 4.5 1.1 7.6 1.1 10.2 2.6 11.6 4.6 11.3 7.4 10.9 10 5.5 12.8 1.2M9.6 6.2C9.9 9 11 11.2 13.3 11.4" fill="none" stroke="rgba(255,255,255,0.30)" stroke-width="2.1"/></svg>
<svg class="a" style="left:185px;top:853px;" width="15" height="12" viewBox="0 0 15 12"><g fill="rgba(255,255,255,0.30)"><rect x="0" y="0" width="7" height="3"/><rect x="8" y="0" width="7" height="3"/><rect x="0" y="4" width="3" height="3"/><rect x="4" y="4" width="7" height="3"/><rect x="12" y="4" width="3" height="3"/><rect x="0" y="8" width="7" height="3"/><rect x="8" y="8" width="7" height="3"/></g></svg>
<svg class="a" style="left:113px;top:876px;" width="15" height="14" viewBox="0 0 15 14"><path d="M0.8 7.2C2.5 -0.6 12.5 -0.6 14.2 7.2" fill="none" stroke="#d8d8d8" stroke-width="1.5"/><circle cx="7.5" cy="4.8" r="3.4" fill="#d8d8d8"/><path d="M1.3 9C4 13.5 11 13.5 13.7 9" fill="none" stroke="#d8d8d8" stroke-width="1.3"/></svg>
<svg class="a" style="left:133px;top:876px;" width="13" height="15" viewBox="0 0 13 15"><rect x="0" y="6" width="12" height="8" fill="rgba(255,255,255,0.30)"/><path d="M6.5 0.8A4 5 0 0 1 10.5 6" fill="none" stroke="rgba(255,255,255,0.30)" stroke-width="1.6"/></svg>
<svg class="a" style="left:149px;top:877px" width="15" height="12" viewBox="0 0 15 13"><path d="M9.8 5.5C9 2.2 7.3 1 5.6 1 2.8 1 1.1 4.5 1.1 7.6 1.1 10.2 2.6 11.6 4.6 11.3 7.4 10.9 10 5.5 12.8 1.2M9.6 6.2C9.9 9 11 11.2 13.3 11.4" fill="none" stroke="rgba(255,255,255,0.30)" stroke-width="2.1"/></svg>
<svg class="a" style="left:167px;top:875px;" width="15" height="15" viewBox="0 0 15 15"><rect x="0" y="0" width="5" height="5" fill="rgba(255,255,255,0.12)"/><rect x="5" y="0" width="5" height="5" fill="rgba(255,255,255,0.28)"/><rect x="10" y="0" width="5" height="5" fill="rgba(255,255,255,0.12)"/><rect x="0" y="5" width="5" height="5" fill="rgba(255,255,255,0.28)"/><rect x="5" y="5" width="5" height="5" fill="rgba(255,255,255,0.12)"/><rect x="10" y="5" width="5" height="5" fill="rgba(255,255,255,0.28)"/><rect x="0" y="10" width="5" height="5" fill="rgba(255,255,255,0.12)"/><rect x="5" y="10" width="5" height="5" fill="rgba(255,255,255,0.28)"/><rect x="10" y="10" width="5" height="5" fill="rgba(255,255,255,0.12)"/></svg>
<svg class="a" style="left:184px;top:876px;" width="16" height="16" viewBox="0 0 16 16"><path d="M6.3 11C4.6 9.3 4.3 8.2 4.3 6.8A3.7 3.7 0 0 1 11.7 6.8C11.7 8.2 11.4 9.3 9.7 11z" fill="rgba(255,255,255,0.30)"/><path d="M6.3 11.6h3.4l-.6 2.6h-2.2z" fill="rgba(255,255,255,0.30)"/></svg>
<div class="a" style="left:0px;top:894px;width:202px;height:82px;background:#484848;"></div>
<div class="a" style="left:0px;top:826px;width:1px;height:150px;background:#555;"></div>
<div class="a" style="left:0px;top:975px;width:1680px;height:15px;background:#474747;"></div>
<div class="a" style="left:1px;top:976px;width:13px;height:14px;border:1px solid #555;background:#404040"></div>
<svg class="a" style="left:5px;top:979px;" width="6" height="9" viewBox="0 0 6 9"><path d="M5 0v8L0 4z" fill="#999"/></svg>
<div class="a" style="left:15px;top:976px;width:1455px;height:14px;border:1px solid #5a5a5a;border-bottom-color:#3a3a3a;background:#4a4a4a"></div>
<div class="a" style="left:1665px;top:976px;width:14px;height:14px;border:1px solid #555;background:#404040"></div>
<svg class="a" style="left:1669px;top:979px;" width="6" height="9" viewBox="0 0 6 9"><path d="M0 0v8l5-4z" fill="#999"/></svg>
<div class="a" style="left:0px;top:990px;width:1680px;height:30px;background:#484848;"></div>
<svg class="a" style="left:7px;top:997px;" width="16" height="16" viewBox="0 0 16 16"><rect x="0.5" y="0.5" width="15" height="15" fill="none" stroke="#d8d8d8"/><circle cx="8" cy="8" r="4.5" fill="none" stroke="#d8d8d8" stroke-dasharray="1.2 1.2"/></svg>
<div class="t" style="left:37px;top:1000px;font-size:12px;line-height:12px;color:#d6d6d6;letter-spacing:-0.15px">Ink brush 25</div>
<div class="t" style="left:369px;top:1000px;font-size:12px;line-height:12px;color:#d6d6d6;letter-spacing:-0.15px">RGB/Alfa (Entero de 8 bits/canal)&nbsp; sRGB-elle-V2-srgbtrc.icc</div>
<div class="a" style="left:1147px;top:995px;width:135px;height:22px;border:1px solid #3a3a3a;background:#444"></div>
<div class="a" style="left:1149px;top:998px;width:12px;height:17px;background:#52708e;"></div>
<div class="t" style="left:1150px;top:1000px;font-size:12px;line-height:12px;color:#d6d6d6;letter-spacing:-0.45px">1.756 <u style="line-height:11px">x</u> 1.240 (166,8 MiB)</div>
<div class="a" style="left:1290px;top:995px;width:21px;height:21px;border-radius:50%;background:#333"></div>
<svg class="a" style="left:1290px;top:995px;" width="21" height="21" viewBox="0 0 21 21"><path d="M10.5 10.5H18" stroke="#eee" stroke-width="1.2"/><circle cx="10.5" cy="10.5" r="1.2" fill="#eee"/><circle cx="18" cy="10.5" r="1.2" fill="#eee"/><path d="M10.5 3v1M10.5 17v1" stroke="#777"/></svg>
<div class="t" style="left:1341px;top:1000px;font-size:12px;line-height:12px;color:#d6d6d6;letter-spacing:-0.6px">0,00°</div>
<div class="t" style="left:1524px;top:1000px;font-size:12px;line-height:12px;color:#d6d6d6;letter-spacing:-0.5px">50,0%</div>
<div class="a" style="left:1573px;top:1004px;width:81px;height:3px;background:#333;"></div>
<div class="a" style="left:1573px;top:1004px;width:14px;height:3px;background:#52708e;"></div>
<div class="a" style="left:1586px;top:998px;width:13px;height:15px;border-radius:3px;border:1px solid #333;background:#4e4e4e"></div>
<div class="a" style="left:1656px;top:994px;width:21px;height:23px;border-radius:3px;border:1px solid #333;background:#444"></div>
<svg class="a" style="left:1660px;top:999px;" width="13" height="13" viewBox="0 0 13 13"><rect x="0.5" y="0.5" width="12" height="12" fill="none" stroke="#ddd"/><rect x="4" y="4" width="5" height="5" fill="#ddd"/></svg>
<div class="a" style="left:0px;top:1020px;width:1680px;height:30px;background:linear-gradient(to right,#e1e1e6 0px,#dfdfe3 250px,#dcd3d2 420px,#d9d3cd 700px,#d8d6c9 900px,#dccfcf 1100px,#dfcfcf 1680px);"></div>
<div class="a" style="left:258px;top:1020px;width:160px;height:30px;background:#eeecee;"></div>
<svg class="a" style="left:16px;top:1026px;" width="21" height="21" viewBox="0 0 21 21"><g fill="none" stroke="#9a9a9a" stroke-width="2"><rect x="1" y="1" width="8" height="8"/><rect x="12" y="1" width="8" height="8"/><rect x="1" y="12" width="8" height="8"/><rect x="12" y="12" width="8" height="8"/></g></svg>
<svg class="a" style="left:68px;top:1026px;" width="17" height="17" viewBox="0 0 17 17"><path d="M15.5 12.5C14 15 11.5 16.5 8.5 16.5 4 16.5 1 13 1 9 1 4.5 4.5 1 9 1c4 0 7 3 7 6.5V9.5H5c.3 2.5 2 4 4.5 4 2 0 3.5-.5 5-1.5zM5 7h7c-.2-2-1.5-3-3.5-3S5.3 5 5 7z" fill="#1473e6"/></svg>
<div class="a" style="left:109px;top:1028px;width:14px;height:14px;border-radius:50%;background:radial-gradient(circle at 45% 55%,rgba(120,160,255,.9) 0,rgba(120,160,255,0) 45%),conic-gradient(from 20deg,#ff3cf0,#ff8ac0 50deg,#ffe000 110deg,#9cff60 150deg,#00e8ff 220deg,#4a8cff 270deg,#c040ff 320deg,#ff3cf0)"></div>
<svg class="a" style="left:108px;top:1028px;" width="15" height="15" viewBox="0 0 15 15"><path d="M0.54 0.86L1.72 0.22L11.31 9.48L9.91 11.31z" fill="#2a2a2a"/><circle cx="10.55" cy="10.34" r="1.40" fill="#1a1a1a"/></svg>
<div class="t" style="left:128px;top:1030px;font-size:12px;line-height:12px;color:#000;">Krita</div>
<div class="a" style="left:102px;top:1047px;width:152px;height:3px;background:#454545;"></div>
<div class="a" style="left:269px;top:1028px;width:14px;height:14px;border-radius:50%;background:radial-gradient(circle at 45% 55%,rgba(120,160,255,.9) 0,rgba(120,160,255,0) 45%),conic-gradient(from 20deg,#ff3cf0,#ff8ac0 50deg,#ffe000 110deg,#9cff60 150deg,#00e8ff 220deg,#4a8cff 270deg,#c040ff 320deg,#ff3cf0)"></div>
<svg class="a" style="left:268px;top:1028px;" width="15" height="15" viewBox="0 0 15 15"><path d="M0.54 0.86L1.72 0.22L11.31 9.48L9.91 11.31z" fill="#2a2a2a"/><circle cx="10.55" cy="10.34" r="1.40" fill="#1a1a1a"/></svg>
<div class="t" style="left:288px;top:1030px;font-size:12px;line-height:12px;color:#000;letter-spacing:-0.6px">japanese animation&nbsp;&nbsp; ...</div>
<div class="a" style="left:258px;top:1047px;width:160px;height:3px;background:#454545;"></div>
<div class="a" style="left:429px;top:1027px;width:16px;height:16px;border-radius:50%;background:conic-gradient(from -30deg,#ea4335 0 120deg,#fbbc05 120deg 240deg,#34a853 240deg 360deg)"></div>
<div class="a" style="left:433px;top:1031px;width:8px;height:8px;border-radius:50%;background:#4285f4;border:1.5px solid #fff"></div>
<div class="a" style="left:440px;top:1037px;width:6px;height:7px;background:#333;border-radius:2px"></div>
<div class="t" style="left:449px;top:1030px;font-size:12px;line-height:12px;color:#000;letter-spacing:-0.3px">Recientes Foro de Ar...</div>
<div class="a" style="left:422px;top:1047px;width:153px;height:3px;background:#454545;"></div>
<svg class="a" style="left:590px;top:1026px;" width="18" height="18" viewBox="0 0 18 18"><path d="M1 5h16v11a1 1 0 0 1-1 1H2a1 1 0 0 1-1-1z" fill="#1d5ea8"/><path d="M6 5V3a3 3 0 0 1 6 0v2" fill="none" stroke="#1d5ea8" stroke-width="1.5"/><rect x="5" y="8" width="3.5" height="3.5" fill="#f25022"/><rect x="9.5" y="8" width="3.5" height="3.5" fill="#7fba00"/><rect x="5" y="12.5" width="3.5" height="3.5" fill="#00a4ef"/><rect x="9.5" y="12.5" width="3.5" height="3.5" fill="#ffb900"/></svg>
<svg class="a" style="left:632px;top:1027px;" width="17" height="16" viewBox="0 0 17 16"><circle cx="8.5" cy="8" r="7" fill="#5a8ac0"/><path d="M2 6c3-3 9-4 14-1" stroke="#fff" stroke-width="2" fill="none"/><path d="M2 10c4 3 10 3 14 0" stroke="#223" stroke-width="2.5" fill="none"/></svg>
<svg class="a" style="left:674px;top:1026px;" width="14" height="18" viewBox="0 0 14 18"><path d="M1 1h8l4 4v12H1z" fill="#fff" stroke="#3b6fb6"/><path d="M3 7h8M3 10h8M3 13h8M3 4h4" stroke="#3b6fb6"/></svg>
<div class="t" style="left:692px;top:1030px;font-size:12px;line-height:12px;color:#000;letter-spacing:0px">Documentos</div>
<div class="a" style="left:667px;top:1047px;width:152px;height:3px;background:#454545;"></div>
<div class="a" style="left:832px;top:1027px;width:16px;height:16px;border-radius:50%;background:#fff;border:1px solid #ccc"></div>
<div class="t" style="left:836px;top:1031px;font-size:9px;line-height:9px;color:#2aa8e0;">U</div>
<div class="t" style="left:853px;top:1030px;font-size:12px;line-height:12px;color:#000;letter-spacing:-0.2px">Wacom Desktop Cen...</div>
<div class="a" style="left:827px;top:1047px;width:152px;height:3px;background:#454545;"></div>
<svg class="a" style="left:993px;top:1026px;" width="17" height="17" viewBox="0 0 17 17"><rect x="5" y="1" width="11" height="15" fill="#fff" stroke="#2b579a"/><path d="M8 5h6M8 8h6M8 11h6" stroke="#2b579a"/><rect x="0" y="3" width="10" height="11" fill="#2b579a"/><text x="1.5" y="11.5" font-size="8" font-family="Liberation Sans" font-weight="bold" fill="#fff">W</text></svg>
<div class="t" style="left:1014px;top:1030px;font-size:12px;line-height:12px;color:#000;letter-spacing:-0.1px">Constancia - Micros...</div>
<div class="a" style="left:988px;top:1047px;width:152px;height:3px;background:#454545;"></div>
<svg class="a" style="left:1471px;top:1030px;" width="14" height="9" viewBox="0 0 14 9"><path d="M1 8l6-6 6 6" fill="none" stroke="#000" stroke-width="1.2"/></svg>
<svg class="a" style="left:1497px;top:1027px;" width="18" height="18" viewBox="0 0 18 18"><path d="M6 14L14 3l2 2-8 11z" fill="none" stroke="#000" stroke-width="1.3"/><path d="M6 11c-3 0-5 2-4 4s3 1 4-1" fill="none" stroke="#000" stroke-width="1.2"/><path d="M10 9c2 1 5 1 6-1" fill="none" stroke="#000" stroke-width="1.2"/></svg>
<div class="t" style="left:1530px;top:1030px;font-size:12px;line-height:12px;color:#000;letter-spacing:-0.6px">ESP</div>
<div class="t" style="left:1567px;top:1030px;font-size:12px;line-height:12px;color:#000;letter-spacing:-0.35px">7:52 a. m.</div>
<svg class="a" style="left:1637px;top:1026px;" width="19" height="19" viewBox="0 0 19 19"><path d="M1 1h17v13H12l-2.5 3L7 14H1z" fill="#000"/><path d="M4 5h11M4 8h11M4 11h8" stroke="#fff" stroke-width="1.2"/></svg></body></html>
